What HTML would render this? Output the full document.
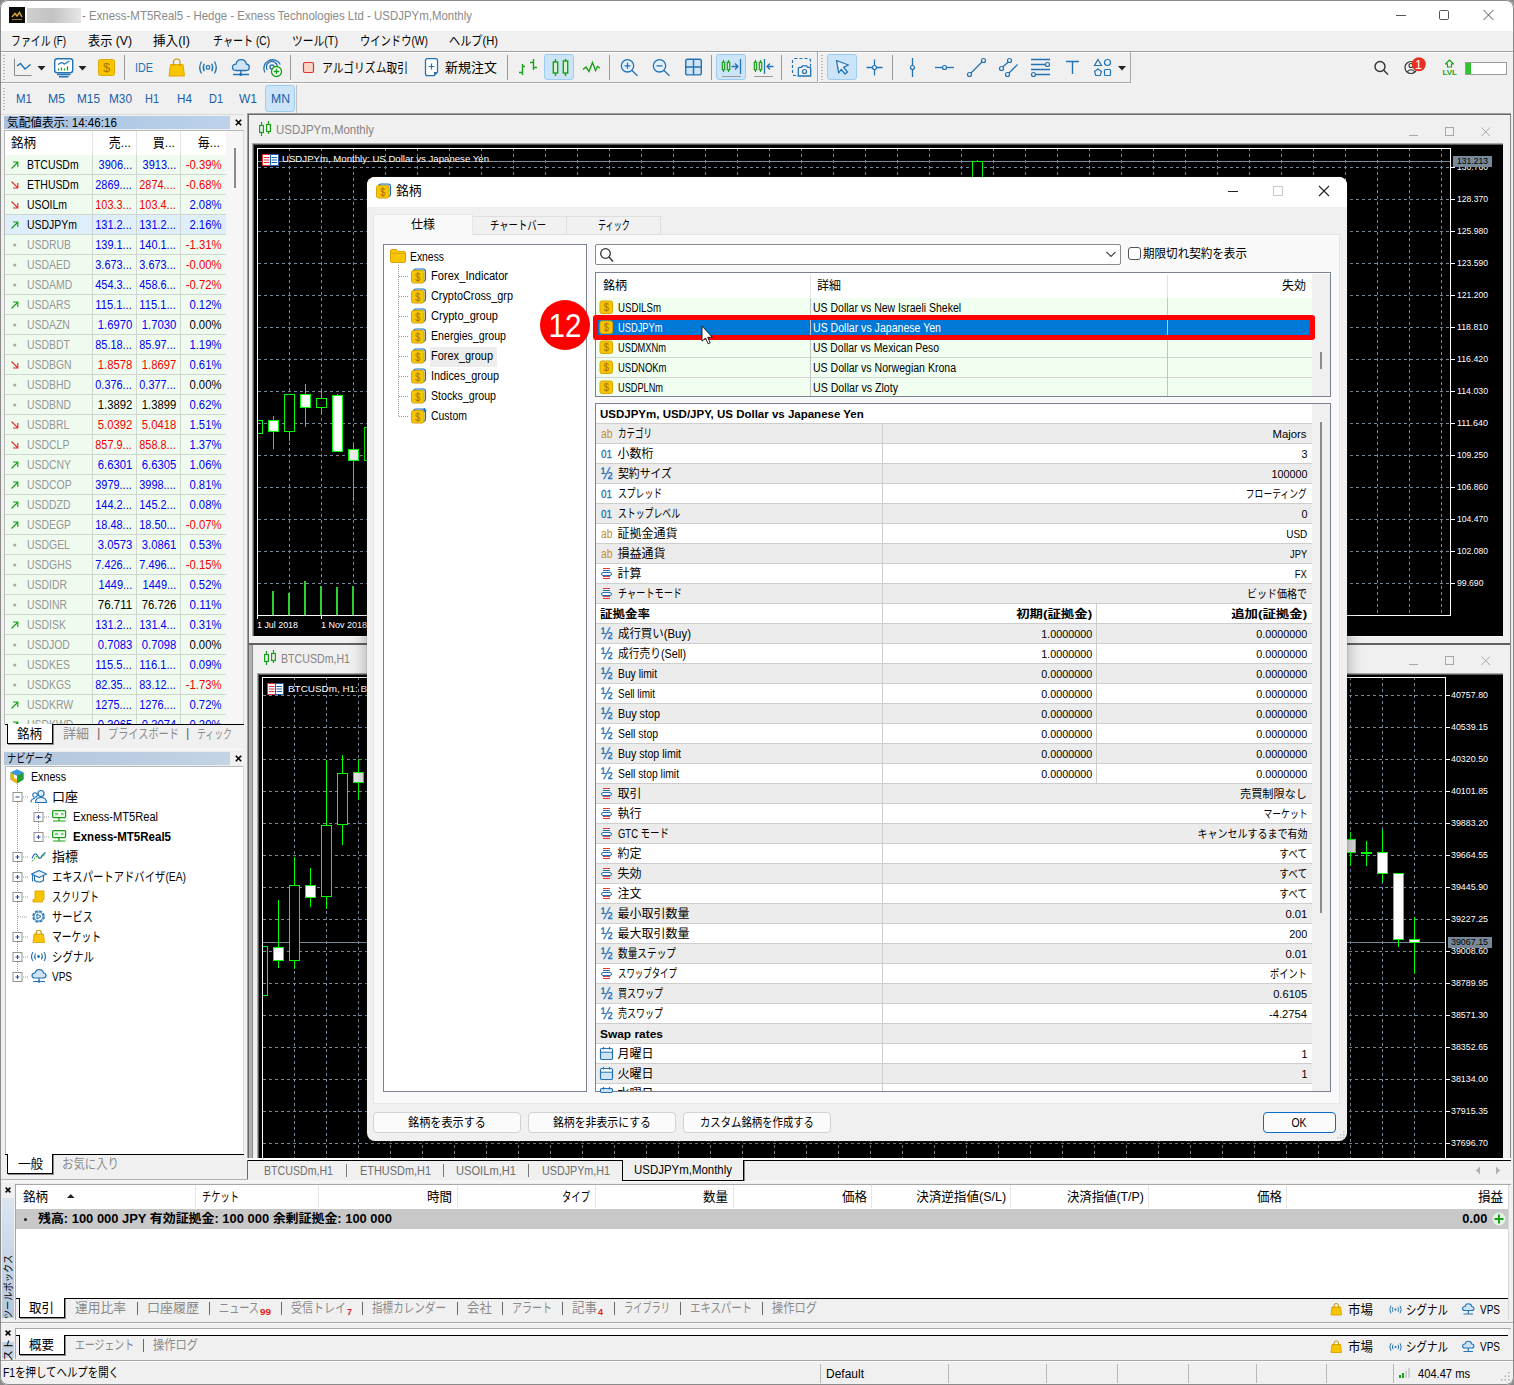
<!DOCTYPE html>
<html lang="ja"><head><meta charset="utf-8"><title>MT5</title>
<style>
html,body{margin:0;padding:0;}
body{width:1514px;height:1385px;overflow:hidden;position:relative;background:#f0f0f0;
font-family:"Liberation Sans","Noto Sans CJK JP",sans-serif;font-size:12px;color:#000;}
div,span,svg{position:absolute;box-sizing:border-box;}
span{white-space:nowrap;}
svg{overflow:visible;}
svg text{font-family:"Liberation Sans","Noto Sans CJK JP",sans-serif;}
</style></head><body>
<div style="left:0px;top:0px;width:1514px;height:31px;background:#ffffff;"></div>
<div style="left:9px;top:7px;width:16px;height:16px;background:#0c0c0c;"></div>
<svg style="left:9px;top:7px;" width="16" height="16" viewBox="0 0 16 16"><path d="M3 10 L6 6.5 L8 9 L10.5 5.5 L13 10" stroke="#d8a030" stroke-width="1.5" fill="none"/><path d="M3 12.5 H13" stroke="#a07820" stroke-width="1"/></svg>
<div style="left:27px;top:8px;width:54px;height:15px;background:linear-gradient(90deg,#d0d0d0,#c2c2c2 45%,#e6e6e6);"></div>
<span style="left:82px;top:7.5px;line-height:16px;height:16px;font-size:13px;color:#8a8a8a;transform:scaleX(0.881);transform-origin:0 50%;">- Exness-MT5Real5 - Hedge - Exness Technologies Ltd - USDJPYm,Monthly</span>
<svg style="left:1395px;top:7px;" width="110" height="16" viewBox="0 0 110 16"><path d="M1 8.5 H11" stroke="#555" fill="none"/><rect x="44.5" y="3.5" width="9" height="9" rx="1.2" stroke="#555" fill="none"/><path d="M88.5 3 L98.5 13 M98.5 3 L88.5 13" stroke="#555" fill="none"/></svg>
<span style="left:11px;top:32.5px;line-height:16px;height:16px;font-size:13px;transform:scaleX(0.762);transform-origin:0 50%;">ファイル (F)</span>
<span style="left:88px;top:32.5px;line-height:16px;height:16px;font-size:13px;transform:scaleX(0.937);transform-origin:0 50%;">表示 (V)</span>
<span style="left:153px;top:32.5px;line-height:16px;height:16px;font-size:13px;transform:scaleX(0.967);transform-origin:0 50%;">挿入(I)</span>
<span style="left:213px;top:32.5px;line-height:16px;height:16px;font-size:13px;transform:scaleX(0.775);transform-origin:0 50%;">チャート (C)</span>
<span style="left:292px;top:32.5px;line-height:16px;height:16px;font-size:13px;transform:scaleX(0.827);transform-origin:0 50%;">ツール(T)</span>
<span style="left:360px;top:32.5px;line-height:16px;height:16px;font-size:13px;transform:scaleX(0.791);transform-origin:0 50%;">ウインドウ(W)</span>
<span style="left:449px;top:32.5px;line-height:16px;height:16px;font-size:13px;transform:scaleX(0.859);transform-origin:0 50%;">ヘルプ(H)</span>
<div style="left:0px;top:51px;width:1514px;height:1px;background:#a0a0a0;"></div>
<div style="left:0px;top:52px;width:1514px;height:1px;background:#fdfdfd;"></div>
<div style="left:0px;top:82px;width:1131px;height:1px;background:#a8a8a8;"></div>
<div style="left:0px;top:83px;width:1131px;height:1px;background:#fafafa;"></div>
<div style="left:817px;top:52px;width:1px;height:31px;background:#a8a8a8;"></div>
<div style="left:818px;top:52px;width:1px;height:31px;background:#fafafa;"></div>
<div style="left:1130px;top:52px;width:1px;height:31px;background:#a8a8a8;"></div>
<div style="left:3px;top:55px;width:2px;height:25px;background-image:repeating-linear-gradient(180deg,#b8b8b8 0 1px,transparent 1px 3px);"></div>
<div style="left:821px;top:55px;width:2px;height:25px;background-image:repeating-linear-gradient(180deg,#b8b8b8 0 1px,transparent 1px 3px);"></div>
<div style="left:3px;top:88px;width:2px;height:22px;background-image:repeating-linear-gradient(180deg,#b8b8b8 0 1px,transparent 1px 3px);"></div>
<svg style="left:0px;top:0px;" width="1514" height="120" viewBox="0 0 1514 120"><path d="M14.5 58.5 V75.5 H31.5" stroke="#8c8c8c" fill="none"/><path d="M17 66 L20.5 63.5 L25 69 L30.5 64.5" stroke="#2272b4" stroke-width="1.4" fill="none"/><path d="M37.5 66 H45.5 L41.5 70.5 Z" fill="#222"/><path d="M78.5 66 H86.5 L82.5 70.5 Z" fill="#222"/><rect x="54.7" y="58.7" width="18" height="14" rx="2.5" stroke="#2272b4" stroke-width="1.4" fill="#fff"/><path d="M57 74.5 H70.5 M59 76.8 H68.5" stroke="#2272b4" stroke-width="1.4"/><path d="M58 64.5 L61.5 62.5 L64.5 64 L69.5 61" stroke="#2272b4" stroke-width="1.2" fill="none"/><path d="M58.5 70.5 V68.5 M61.5 70.5 V67.5 M64.5 70.5 V68.5 M67.5 70.5 V66.5" stroke="#18a018" stroke-width="1.3"/><rect x="98.5" y="59.5" width="16" height="16" rx="2" fill="#f7c600" stroke="#e0a800"/><text x="106.5" y="72.3" font-size="13" text-anchor="middle" fill="#a87800">$</text><path d="M124.5 55 V80 M290.5 55 V80 M507.5 55 V80 M609.5 55 V80 M711.5 55 V80 M781.5 55 V80 M892.5 55 V80" stroke="#9a9a9a"/><path d="M170.5 64.5 H183 L184.5 76 H169 Z" fill="#f7c600" stroke="#e0a800"/><path d="M173.5 66 V62 Q173.5 59 176.7 59 Q180 59 180 62 V66" stroke="#c89600" fill="none" stroke-width="1.2"/><circle cx="208" cy="67.5" r="1.8" stroke="#2272b4" fill="none" stroke-width="1.3"/><path d="M204.3 63.8 Q202.3 67.5 204.3 71.2 M211.7 63.8 Q213.7 67.5 211.7 71.2 M201.5 61.5 Q198 67.5 201.5 73.5 M214.5 61.5 Q218 67.5 214.5 73.5" stroke="#2272b4" fill="none" stroke-width="1.3"/><path d="M236 70.5 Q232.5 70.5 232.5 67.3 Q232.5 64.3 236 64.2 Q237 59.5 241.5 59.7 Q245.5 59.8 246.3 64 Q249.3 64.3 249.3 67.3 Q249.3 70.5 246 70.5 Z" stroke="#2272b4" fill="#cfe4f5" stroke-width="1.3"/><path d="M240.8 70.5 V74 M233 74.5 H249" stroke="#2272b4" stroke-width="1.3"/><circle cx="240.8" cy="74.5" r="1.5" fill="#2272b4"/><circle cx="272" cy="67" r="2" stroke="#2272b4" fill="none" stroke-width="1.3"/><path d="M267.3 70 A5.5 5.5 0 1 1 277.3 66" stroke="#2272b4" fill="none" stroke-width="1.3"/><path d="M264.8 72.5 A8.6 8.6 0 1 1 280.3 64.5" stroke="#2272b4" fill="none" stroke-width="1.3"/><circle cx="276.5" cy="71.5" r="5" fill="#fff" stroke="#18a018" stroke-width="1.3"/><path d="M273.7 71.5 H279.3 M276.5 68.7 V74.3" stroke="#18a018" stroke-width="1.3"/><rect x="303.5" y="62.5" width="10" height="10" rx="1.5" fill="#fad4c4" stroke="#e03434" stroke-width="1.2"/><path d="M427.5 58.7 H435.5 Q437.5 58.7 437.5 60.7 V72 L434 75.7 H427.5 Q425.5 75.7 425.5 73.7 V60.7 Q425.5 58.7 427.5 58.7 Z" stroke="#2272b4" fill="#fff" stroke-width="1.3"/><path d="M437.5 72 H434 V75.7 Z" fill="#2272b4"/><path d="M428.5 66.5 H434.5 M431.5 63.5 V69.5" stroke="#2272b4" stroke-width="1.2"/><path d="M522.5 64 V75 M519 72.5 H522.5 M522.5 66.5 H525 M533.5 59 V70 M530 62.5 H533.5 M533.5 67.5 H537" stroke="#18a018" stroke-width="1.4" fill="none"/><rect x="544.5" y="54.5" width="29" height="25" rx="2.5" fill="#cce4f7" stroke="#9cccf0"/><path d="M555.5 59 V76 M565.5 59 V76" stroke="#18a018" stroke-width="1.4"/><rect x="553.3" y="62" width="4.4" height="11" fill="#d8f2d8" stroke="#18a018" stroke-width="1.4"/><rect x="563.3" y="61" width="4.4" height="12" fill="#d8f2d8" stroke="#18a018" stroke-width="1.4"/><path d="M583 69.5 L586 67 L589 71.5 L592.5 62.5 L595.5 70.5 L597.5 66.5 L600 68" stroke="#18a018" stroke-width="1.4" fill="none"/><circle cx="627.5" cy="65.8" r="6.2" stroke="#2272b4" fill="#e4f0fa" stroke-width="1.3"/><path d="M632 70.5 L637.5 75.7 M624.5 65.8 H630.5 M627.5 62.8 V68.8" stroke="#2272b4" stroke-width="1.3"/><circle cx="659.5" cy="65.8" r="6.2" stroke="#2272b4" fill="#e4f0fa" stroke-width="1.3"/><path d="M664 70.5 L669.5 75.7 M656.5 65.8 H662.5" stroke="#2272b4" stroke-width="1.3"/><rect x="685.7" y="59.3" width="15.6" height="15.6" rx="2" stroke="#2272b4" fill="#cfe4f5" stroke-width="1.4"/><path d="M693.5 59.5 V75 M686 67 H701" stroke="#2272b4" stroke-width="1.4"/><rect x="716.5" y="54.5" width="29" height="25" rx="2.5" fill="#cce4f7" stroke="#9cccf0"/><path d="M723.5 60 V72 M728.5 60 V72" stroke="#18a018" stroke-width="1.2"/><rect x="722.3" y="62.3" width="2.4" height="7.4" fill="#d8f2d8" stroke="#18a018" stroke-width="1.2"/><rect x="727.3" y="62.3" width="2.4" height="7.4" fill="#d8f2d8" stroke="#18a018" stroke-width="1.2"/><path d="M731.5 66.5 H738 M735 63.5 L738 66.5 L735 69.5" stroke="#2272b4" fill="none" stroke-width="1.3"/><path d="M740.5 59 V74" stroke="#2272b4" stroke-width="1.3"/><path d="M722 76.5 H741" stroke="#9a9a9a"/><path d="M755.5 60 V72 M760.5 60 V72" stroke="#18a018" stroke-width="1.2"/><rect x="754.3" y="62.3" width="2.4" height="7.4" fill="#d8f2d8" stroke="#18a018" stroke-width="1.2"/><rect x="759.3" y="62.3" width="2.4" height="7.4" fill="#d8f2d8" stroke="#18a018" stroke-width="1.2"/><path d="M764.5 59 V74" stroke="#2272b4" stroke-width="1.3"/><path d="M767 66.5 H773.5 M770 63.5 L767 66.5 L770 69.5" stroke="#2272b4" fill="none" stroke-width="1.3"/><path d="M754 76.5 H773" stroke="#9a9a9a"/><rect x="792.5" y="58.5" width="18" height="17" rx="2" stroke="#2272b4" fill="none" stroke-width="1.2" stroke-dasharray="3 2"/><path d="M798.3 76 V68.5 Q798.3 67.3 799.5 67.3 H801.5 L802.5 65.8 H806.5 L807.5 67.3 H809.5 Q810.7 67.3 810.7 68.5 V76 Z" fill="#f0f0f0" stroke="#2272b4" stroke-width="1.3"/><circle cx="804.5" cy="71.5" r="2" stroke="#2272b4" fill="none" stroke-width="1.2"/><rect x="827.5" y="54.5" width="29" height="25" rx="2.5" fill="#cce4f7" stroke="#9cccf0"/><path d="M836.5 60.5 L848.5 65 L843.5 67.3 L847.5 72 L845 74 L841.3 69.3 L838.7 73 Z" stroke="#2272b4" fill="#e4f0fa" stroke-width="1.3" stroke-linejoin="round"/><path d="M866.5 67.5 H882.5 M874.5 59.5 V75.5" stroke="#2272b4" stroke-width="1.3"/><circle cx="874.5" cy="67.5" r="2" fill="#f0f0f0" stroke="#2272b4" stroke-width="1.2"/><path d="M912.5 58 V77" stroke="#2272b4" stroke-width="1.3"/><circle cx="912.5" cy="67.5" r="2" fill="#f0f0f0" stroke="#2272b4" stroke-width="1.2"/><path d="M935 67.5 H954" stroke="#2272b4" stroke-width="1.3"/><circle cx="944.5" cy="67.5" r="2" fill="#f0f0f0" stroke="#2272b4" stroke-width="1.2"/><path d="M970 74 L983 61" stroke="#2272b4" stroke-width="1.3"/><circle cx="969.5" cy="74.5" r="2" fill="#f0f0f0" stroke="#2272b4" stroke-width="1.2"/><circle cx="983.5" cy="60.5" r="2" fill="#f0f0f0" stroke="#2272b4" stroke-width="1.2"/><path d="M1002 67.5 L1009 61.5 M1008 74 L1017.5 64.5" stroke="#2272b4" stroke-width="1.3"/><circle cx="1001.5" cy="68.5" r="2" fill="#f0f0f0" stroke="#2272b4" stroke-width="1.2"/><circle cx="1009.5" cy="60.5" r="2" fill="#f0f0f0" stroke="#2272b4" stroke-width="1.2"/><circle cx="1007.5" cy="74.5" r="2" fill="#f0f0f0" stroke="#2272b4" stroke-width="1.2"/><path d="M1031 59.5 H1050 M1031 64.5 H1046 M1031 69.5 H1050 M1036 74.5 H1050" stroke="#2272b4" stroke-width="1.3"/><circle cx="1047.5" cy="64.5" r="2" fill="#f0f0f0" stroke="#2272b4" stroke-width="1.2"/><circle cx="1033.5" cy="74.5" r="2" fill="#f0f0f0" stroke="#2272b4" stroke-width="1.2"/><path d="M1066 61.5 H1079 M1072.5 61.5 V74" stroke="#2272b4" stroke-width="1.4"/><path d="M1098 59.5 L1101.5 65.5 H1094.5 Z" stroke="#2272b4" fill="none" stroke-width="1.2"/><circle cx="1107.5" cy="62.5" r="3" stroke="#2272b4" fill="none" stroke-width="1.2"/><path d="M1098 69 L1101.5 71.5 L1100.2 75.5 H1095.8 L1094.5 71.5 Z" stroke="#2272b4" fill="none" stroke-width="1.2"/><rect x="1104.5" y="69.5" width="6" height="6" rx="1" stroke="#2272b4" fill="none" stroke-width="1.2"/><path d="M1118 66 H1126 L1122 70.5 Z" fill="#222"/><circle cx="1380" cy="66.5" r="5" stroke="#333" fill="none" stroke-width="1.4"/><path d="M1383.7 70.2 L1388 74.5" stroke="#333" stroke-width="1.4"/><circle cx="1411" cy="67.5" r="6" stroke="#333" fill="none" stroke-width="1.2"/><circle cx="1411" cy="65.5" r="2" stroke="#333" fill="none" stroke-width="1.1"/><path d="M1407 72 Q1411 67.5 1415 72" stroke="#333" fill="none" stroke-width="1.1"/><circle cx="1418.8" cy="64.3" r="7" fill="#e8311f"/><text x="1418.6" y="68.8" font-size="12.5" text-anchor="middle" fill="#fff">1</text><path d="M1449.5 60 L1453.5 64 H1451.5 V67 H1447.5 V64 H1445.5 Z" stroke="#18a018" fill="none" stroke-width="1.1" stroke-linejoin="round"/><text x="1449.7" y="74.5" font-size="8" font-weight="bold" text-anchor="middle" fill="#18a018">LVL</text><rect x="1465.5" y="62.5" width="41" height="12" fill="#fff" stroke="#9a9a9a"/><rect x="1466" y="63" width="5" height="11" fill="#2fc42f"/></svg>
<span style="left:135px;top:59.5px;line-height:16px;height:16px;font-size:13px;color:#2272b4;transform:scaleX(0.831);transform-origin:0 50%;">IDE</span>
<span style="left:322px;top:59.5px;line-height:16px;height:16px;font-size:13px;transform:scaleX(0.83);transform-origin:0 50%;">アルゴリズム取引</span>
<span style="left:445px;top:59.5px;line-height:16px;height:16px;font-size:13px;">新規注文</span>
<div style="left:265px;top:85px;width:30px;height:27px;background:#cce4f7;border:1px solid #9cccf0;border-radius:3px;"></div>
<span style="left:16px;top:90.5px;line-height:16px;height:16px;font-size:13px;color:#1a5fa8;transform:scaleX(0.886);transform-origin:0 50%;">M1</span>
<span style="left:48px;top:90.5px;line-height:16px;height:16px;font-size:13px;color:#1a5fa8;transform:scaleX(0.941);transform-origin:0 50%;">M5</span>
<span style="left:77px;top:90.5px;line-height:16px;height:16px;font-size:13px;color:#1a5fa8;transform:scaleX(0.909);transform-origin:0 50%;">M15</span>
<span style="left:109px;top:90.5px;line-height:16px;height:16px;font-size:13px;color:#1a5fa8;transform:scaleX(0.909);transform-origin:0 50%;">M30</span>
<span style="left:145px;top:90.5px;line-height:16px;height:16px;font-size:13px;color:#1a5fa8;transform:scaleX(0.842);transform-origin:0 50%;">H1</span>
<span style="left:177px;top:90.5px;line-height:16px;height:16px;font-size:13px;color:#1a5fa8;transform:scaleX(0.902);transform-origin:0 50%;">H4</span>
<span style="left:209px;top:90.5px;line-height:16px;height:16px;font-size:13px;color:#1a5fa8;transform:scaleX(0.842);transform-origin:0 50%;">D1</span>
<span style="left:239px;top:90.5px;line-height:16px;height:16px;font-size:13px;color:#1a5fa8;transform:scaleX(0.923);transform-origin:0 50%;">W1</span>
<span style="left:271px;top:90.5px;line-height:16px;height:16px;font-size:13px;color:#1a5fa8;transform:scaleX(0.94);transform-origin:0 50%;">MN</span>
<div style="left:296px;top:85px;width:1px;height:28px;background:#c0c0c0;"></div>
<div style="left:0px;top:114px;width:247px;height:1px;background:#dadada;"></div>
<div style="left:4px;top:116px;width:226px;height:13px;background:linear-gradient(90deg,#a6bfe0,#b4cbe6 60%,#bdd2ea);"></div>
<span style="left:7px;top:114.5px;line-height:16px;height:16px;transform:scaleX(0.97);transform-origin:0 50%;">気配値表示: 14:46:16</span>
<svg style="left:235px;top:119px;" width="7" height="7" viewBox="0 0 7 7"><path d="M0.8 0.8 L6.2 6.2 M6.2 0.8 L0.8 6.2" stroke="#000" stroke-width="1.6"/></svg>
<div style="left:4px;top:130px;width:240px;height:1px;background:#e2e2e2;"></div>
<div style="left:243px;top:130px;width:1px;height:594px;background:#dcdcdc;"></div>
<div style="left:5px;top:131px;width:221px;height:24px;background:#fff;"></div>
<div style="left:4px;top:130px;width:240px;height:594px;border-top:1px solid #b8b8b8;border-left:1px solid #b8b8b8;"></div>
<div style="left:226px;top:131px;width:17px;height:593px;background:#f6f6f6;"></div>
<div style="left:234px;top:148px;width:2px;height:40px;background:#8a8a8a;"></div>
<span style="left:11px;top:135.0px;line-height:16px;height:16px;font-size:13px;transform:scaleX(0.961);transform-origin:0 50%;">銘柄</span>
<span style="right:1383px;top:135.0px;line-height:16px;height:16px;font-size:13px;transform:scaleX(0.923);transform-origin:100% 50%;">売...</span>
<span style="right:1339px;top:135.0px;line-height:16px;height:16px;font-size:13px;transform:scaleX(0.923);transform-origin:100% 50%;">買...</span>
<span style="right:1294px;top:135.0px;line-height:16px;height:16px;font-size:13px;transform:scaleX(0.923);transform-origin:100% 50%;">毎...</span>
<div style="left:5px;top:155px;width:221px;height:569px;overflow:hidden;background:#f0fbf0">
<div style="left:0;top:19px;width:221px;height:1px;background:#cfd6cf"></div>
<div style="left:0;top:39px;width:221px;height:1px;background:#cfd6cf"></div>
<div style="left:0;top:59px;width:221px;height:1px;background:#cfd6cf"></div>
<div style="left:0;top:60px;width:221px;height:19px;background:#deeefb"></div>
<div style="left:0;top:79px;width:221px;height:1px;background:#cfd6cf"></div>
<div style="left:0;top:99px;width:221px;height:1px;background:#cfd6cf"></div>
<div style="left:0;top:119px;width:221px;height:1px;background:#cfd6cf"></div>
<div style="left:0;top:139px;width:221px;height:1px;background:#cfd6cf"></div>
<div style="left:0;top:159px;width:221px;height:1px;background:#cfd6cf"></div>
<div style="left:0;top:179px;width:221px;height:1px;background:#cfd6cf"></div>
<div style="left:0;top:199px;width:221px;height:1px;background:#cfd6cf"></div>
<div style="left:0;top:219px;width:221px;height:1px;background:#cfd6cf"></div>
<div style="left:0;top:239px;width:221px;height:1px;background:#cfd6cf"></div>
<div style="left:0;top:259px;width:221px;height:1px;background:#cfd6cf"></div>
<div style="left:0;top:279px;width:221px;height:1px;background:#cfd6cf"></div>
<div style="left:0;top:299px;width:221px;height:1px;background:#cfd6cf"></div>
<div style="left:0;top:319px;width:221px;height:1px;background:#cfd6cf"></div>
<div style="left:0;top:339px;width:221px;height:1px;background:#cfd6cf"></div>
<div style="left:0;top:359px;width:221px;height:1px;background:#cfd6cf"></div>
<div style="left:0;top:379px;width:221px;height:1px;background:#cfd6cf"></div>
<div style="left:0;top:399px;width:221px;height:1px;background:#cfd6cf"></div>
<div style="left:0;top:419px;width:221px;height:1px;background:#cfd6cf"></div>
<div style="left:0;top:439px;width:221px;height:1px;background:#cfd6cf"></div>
<div style="left:0;top:459px;width:221px;height:1px;background:#cfd6cf"></div>
<div style="left:0;top:479px;width:221px;height:1px;background:#cfd6cf"></div>
<div style="left:0;top:499px;width:221px;height:1px;background:#cfd6cf"></div>
<div style="left:0;top:519px;width:221px;height:1px;background:#cfd6cf"></div>
<div style="left:0;top:539px;width:221px;height:1px;background:#cfd6cf"></div>
<div style="left:0;top:559px;width:221px;height:1px;background:#cfd6cf"></div>
<div style="left:0;top:579px;width:221px;height:1px;background:#cfd6cf"></div>
<div style="left:87px;top:0;width:1px;height:569px;background:#cfd6cf"></div>
<div style="left:131px;top:0;width:1px;height:569px;background:#cfd6cf"></div>
<div style="left:175px;top:0;width:1px;height:569px;background:#cfd6cf"></div>
<svg style="left:0;top:0" width="221" height="569"><path d="M6.5 13.5 L12.5 7.5 M8 7 H12.8 V12" stroke="#18a018" stroke-width="1.15" fill="none"/><path d="M6.5 26.5 L12.5 32.5 M8 33 H12.8 V28" stroke="#e03030" stroke-width="1.15" fill="none"/><path d="M6.5 46.5 L12.5 52.5 M8 53 H12.8 V48" stroke="#e03030" stroke-width="1.15" fill="none"/><path d="M6.5 73.5 L12.5 67.5 M8 67 H12.8 V72" stroke="#18a018" stroke-width="1.15" fill="none"/><circle cx="9.7" cy="90" r="1.6" fill="#a8a8a8"/><circle cx="9.7" cy="110" r="1.6" fill="#a8a8a8"/><circle cx="9.7" cy="130" r="1.6" fill="#a8a8a8"/><path d="M6.5 153.5 L12.5 147.5 M8 147 H12.8 V152" stroke="#18a018" stroke-width="1.15" fill="none"/><circle cx="9.7" cy="170" r="1.6" fill="#a8a8a8"/><circle cx="9.7" cy="190" r="1.6" fill="#a8a8a8"/><path d="M6.5 206.5 L12.5 212.5 M8 213 H12.8 V208" stroke="#e03030" stroke-width="1.15" fill="none"/><circle cx="9.7" cy="230" r="1.6" fill="#a8a8a8"/><circle cx="9.7" cy="250" r="1.6" fill="#a8a8a8"/><path d="M6.5 266.5 L12.5 272.5 M8 273 H12.8 V268" stroke="#e03030" stroke-width="1.15" fill="none"/><path d="M6.5 286.5 L12.5 292.5 M8 293 H12.8 V288" stroke="#e03030" stroke-width="1.15" fill="none"/><path d="M6.5 313.5 L12.5 307.5 M8 307 H12.8 V312" stroke="#18a018" stroke-width="1.15" fill="none"/><path d="M6.5 333.5 L12.5 327.5 M8 327 H12.8 V332" stroke="#18a018" stroke-width="1.15" fill="none"/><path d="M6.5 353.5 L12.5 347.5 M8 347 H12.8 V352" stroke="#18a018" stroke-width="1.15" fill="none"/><path d="M6.5 373.5 L12.5 367.5 M8 367 H12.8 V372" stroke="#18a018" stroke-width="1.15" fill="none"/><circle cx="9.7" cy="390" r="1.6" fill="#a8a8a8"/><circle cx="9.7" cy="410" r="1.6" fill="#a8a8a8"/><circle cx="9.7" cy="430" r="1.6" fill="#a8a8a8"/><circle cx="9.7" cy="450" r="1.6" fill="#a8a8a8"/><path d="M6.5 473.5 L12.5 467.5 M8 467 H12.8 V472" stroke="#18a018" stroke-width="1.15" fill="none"/><circle cx="9.7" cy="490" r="1.6" fill="#a8a8a8"/><circle cx="9.7" cy="510" r="1.6" fill="#a8a8a8"/><circle cx="9.7" cy="530" r="1.6" fill="#a8a8a8"/><path d="M6.5 553.5 L12.5 547.5 M8 547 H12.8 V552" stroke="#18a018" stroke-width="1.15" fill="none"/><path d="M6.5 573.5 L12.5 567.5 M8 567 H12.8 V572" stroke="#18a018" stroke-width="1.15" fill="none"/></svg>
<span style="right:94px;top:2px;line-height:16px;font-size:12.5px;color:#0000f0;transform:scaleX(0.88);transform-origin:100% 50%">3906...</span>
<span style="right:50px;top:2px;line-height:16px;font-size:12.5px;color:#0000f0;transform:scaleX(0.88);transform-origin:100% 50%">3913...</span>
<span style="right:4.5px;top:2px;line-height:16px;font-size:12.5px;color:#f00000;transform:scaleX(0.906);transform-origin:100% 50%">-0.39%</span>
<span style="left:21.5px;top:2px;line-height:16px;font-size:12.5px;color:#000;transform:scaleX(0.835);transform-origin:0 50%">BTCUSDm</span>
<span style="right:94px;top:22px;line-height:16px;font-size:12.5px;color:#0000f0;transform:scaleX(0.873);transform-origin:100% 50%">2869....</span>
<span style="right:50px;top:22px;line-height:16px;font-size:12.5px;color:#f00000;transform:scaleX(0.873);transform-origin:100% 50%">2874....</span>
<span style="right:4.5px;top:22px;line-height:16px;font-size:12.5px;color:#f00000;transform:scaleX(0.906);transform-origin:100% 50%">-0.68%</span>
<span style="left:21.5px;top:22px;line-height:16px;font-size:12.5px;color:#000;transform:scaleX(0.835);transform-origin:0 50%">ETHUSDm</span>
<span style="right:94px;top:42px;line-height:16px;font-size:12.5px;color:#f00000;transform:scaleX(0.873);transform-origin:100% 50%">103.3...</span>
<span style="right:50px;top:42px;line-height:16px;font-size:12.5px;color:#f00000;transform:scaleX(0.873);transform-origin:100% 50%">103.4...</span>
<span style="right:4.5px;top:42px;line-height:16px;font-size:12.5px;color:#0000f0;transform:scaleX(0.903);transform-origin:100% 50%">2.08%</span>
<span style="left:21.5px;top:42px;line-height:16px;font-size:12.5px;color:#000;transform:scaleX(0.835);transform-origin:0 50%">USOILm</span>
<span style="right:94px;top:62px;line-height:16px;font-size:12.5px;color:#0000f0;transform:scaleX(0.873);transform-origin:100% 50%">131.2...</span>
<span style="right:50px;top:62px;line-height:16px;font-size:12.5px;color:#0000f0;transform:scaleX(0.873);transform-origin:100% 50%">131.2...</span>
<span style="right:4.5px;top:62px;line-height:16px;font-size:12.5px;color:#0000f0;transform:scaleX(0.903);transform-origin:100% 50%">2.16%</span>
<span style="left:21.5px;top:62px;line-height:16px;font-size:12.5px;color:#000;transform:scaleX(0.835);transform-origin:0 50%">USDJPYm</span>
<span style="right:94px;top:82px;line-height:16px;font-size:12.5px;color:#0000f0;transform:scaleX(0.873);transform-origin:100% 50%">139.1...</span>
<span style="right:50px;top:82px;line-height:16px;font-size:12.5px;color:#0000f0;transform:scaleX(0.873);transform-origin:100% 50%">140.1...</span>
<span style="right:4.5px;top:82px;line-height:16px;font-size:12.5px;color:#f00000;transform:scaleX(0.906);transform-origin:100% 50%">-1.31%</span>
<span style="left:21.5px;top:82px;line-height:16px;font-size:12.5px;color:#959595;transform:scaleX(0.835);transform-origin:0 50%">USDRUB</span>
<span style="right:94px;top:102px;line-height:16px;font-size:12.5px;color:#0000f0;transform:scaleX(0.873);transform-origin:100% 50%">3.673...</span>
<span style="right:50px;top:102px;line-height:16px;font-size:12.5px;color:#0000f0;transform:scaleX(0.873);transform-origin:100% 50%">3.673...</span>
<span style="right:4.5px;top:102px;line-height:16px;font-size:12.5px;color:#f00000;transform:scaleX(0.906);transform-origin:100% 50%">-0.00%</span>
<span style="left:21.5px;top:102px;line-height:16px;font-size:12.5px;color:#959595;transform:scaleX(0.835);transform-origin:0 50%">USDAED</span>
<span style="right:94px;top:122px;line-height:16px;font-size:12.5px;color:#0000f0;transform:scaleX(0.873);transform-origin:100% 50%">454.3...</span>
<span style="right:50px;top:122px;line-height:16px;font-size:12.5px;color:#0000f0;transform:scaleX(0.873);transform-origin:100% 50%">458.6...</span>
<span style="right:4.5px;top:122px;line-height:16px;font-size:12.5px;color:#f00000;transform:scaleX(0.906);transform-origin:100% 50%">-0.72%</span>
<span style="left:21.5px;top:122px;line-height:16px;font-size:12.5px;color:#959595;transform:scaleX(0.835);transform-origin:0 50%">USDAMD</span>
<span style="right:94px;top:142px;line-height:16px;font-size:12.5px;color:#0000f0;transform:scaleX(0.893);transform-origin:100% 50%">115.1...</span>
<span style="right:50px;top:142px;line-height:16px;font-size:12.5px;color:#0000f0;transform:scaleX(0.893);transform-origin:100% 50%">115.1...</span>
<span style="right:4.5px;top:142px;line-height:16px;font-size:12.5px;color:#0000f0;transform:scaleX(0.903);transform-origin:100% 50%">0.12%</span>
<span style="left:21.5px;top:142px;line-height:16px;font-size:12.5px;color:#959595;transform:scaleX(0.835);transform-origin:0 50%">USDARS</span>
<span style="right:94px;top:162px;line-height:16px;font-size:12.5px;color:#0000f0;transform:scaleX(0.902);transform-origin:100% 50%">1.6970</span>
<span style="right:50px;top:162px;line-height:16px;font-size:12.5px;color:#0000f0;transform:scaleX(0.902);transform-origin:100% 50%">1.7030</span>
<span style="right:4.5px;top:162px;line-height:16px;font-size:12.5px;color:#000;transform:scaleX(0.903);transform-origin:100% 50%">0.00%</span>
<span style="left:21.5px;top:162px;line-height:16px;font-size:12.5px;color:#959595;transform:scaleX(0.835);transform-origin:0 50%">USDAZN</span>
<span style="right:94px;top:182px;line-height:16px;font-size:12.5px;color:#0000f0;transform:scaleX(0.873);transform-origin:100% 50%">85.18...</span>
<span style="right:50px;top:182px;line-height:16px;font-size:12.5px;color:#0000f0;transform:scaleX(0.873);transform-origin:100% 50%">85.97...</span>
<span style="right:4.5px;top:182px;line-height:16px;font-size:12.5px;color:#0000f0;transform:scaleX(0.903);transform-origin:100% 50%">1.19%</span>
<span style="left:21.5px;top:182px;line-height:16px;font-size:12.5px;color:#959595;transform:scaleX(0.835);transform-origin:0 50%">USDBDT</span>
<span style="right:94px;top:202px;line-height:16px;font-size:12.5px;color:#f00000;transform:scaleX(0.902);transform-origin:100% 50%">1.8578</span>
<span style="right:50px;top:202px;line-height:16px;font-size:12.5px;color:#f00000;transform:scaleX(0.902);transform-origin:100% 50%">1.8697</span>
<span style="right:4.5px;top:202px;line-height:16px;font-size:12.5px;color:#0000f0;transform:scaleX(0.903);transform-origin:100% 50%">0.61%</span>
<span style="left:21.5px;top:202px;line-height:16px;font-size:12.5px;color:#959595;transform:scaleX(0.835);transform-origin:0 50%">USDBGN</span>
<span style="right:94px;top:222px;line-height:16px;font-size:12.5px;color:#0000f0;transform:scaleX(0.873);transform-origin:100% 50%">0.376...</span>
<span style="right:50px;top:222px;line-height:16px;font-size:12.5px;color:#0000f0;transform:scaleX(0.873);transform-origin:100% 50%">0.377...</span>
<span style="right:4.5px;top:222px;line-height:16px;font-size:12.5px;color:#000;transform:scaleX(0.903);transform-origin:100% 50%">0.00%</span>
<span style="left:21.5px;top:222px;line-height:16px;font-size:12.5px;color:#959595;transform:scaleX(0.835);transform-origin:0 50%">USDBHD</span>
<span style="right:94px;top:242px;line-height:16px;font-size:12.5px;color:#000;transform:scaleX(0.902);transform-origin:100% 50%">1.3892</span>
<span style="right:50px;top:242px;line-height:16px;font-size:12.5px;color:#000;transform:scaleX(0.902);transform-origin:100% 50%">1.3899</span>
<span style="right:4.5px;top:242px;line-height:16px;font-size:12.5px;color:#0000f0;transform:scaleX(0.903);transform-origin:100% 50%">0.62%</span>
<span style="left:21.5px;top:242px;line-height:16px;font-size:12.5px;color:#959595;transform:scaleX(0.835);transform-origin:0 50%">USDBND</span>
<span style="right:94px;top:262px;line-height:16px;font-size:12.5px;color:#f00000;transform:scaleX(0.902);transform-origin:100% 50%">5.0392</span>
<span style="right:50px;top:262px;line-height:16px;font-size:12.5px;color:#f00000;transform:scaleX(0.902);transform-origin:100% 50%">5.0418</span>
<span style="right:4.5px;top:262px;line-height:16px;font-size:12.5px;color:#0000f0;transform:scaleX(0.903);transform-origin:100% 50%">1.51%</span>
<span style="left:21.5px;top:262px;line-height:16px;font-size:12.5px;color:#959595;transform:scaleX(0.835);transform-origin:0 50%">USDBRL</span>
<span style="right:94px;top:282px;line-height:16px;font-size:12.5px;color:#f00000;transform:scaleX(0.873);transform-origin:100% 50%">857.9...</span>
<span style="right:50px;top:282px;line-height:16px;font-size:12.5px;color:#f00000;transform:scaleX(0.873);transform-origin:100% 50%">858.8...</span>
<span style="right:4.5px;top:282px;line-height:16px;font-size:12.5px;color:#0000f0;transform:scaleX(0.903);transform-origin:100% 50%">1.37%</span>
<span style="left:21.5px;top:282px;line-height:16px;font-size:12.5px;color:#959595;transform:scaleX(0.835);transform-origin:0 50%">USDCLP</span>
<span style="right:94px;top:302px;line-height:16px;font-size:12.5px;color:#0000f0;transform:scaleX(0.902);transform-origin:100% 50%">6.6301</span>
<span style="right:50px;top:302px;line-height:16px;font-size:12.5px;color:#0000f0;transform:scaleX(0.902);transform-origin:100% 50%">6.6305</span>
<span style="right:4.5px;top:302px;line-height:16px;font-size:12.5px;color:#0000f0;transform:scaleX(0.903);transform-origin:100% 50%">1.06%</span>
<span style="left:21.5px;top:302px;line-height:16px;font-size:12.5px;color:#959595;transform:scaleX(0.835);transform-origin:0 50%">USDCNY</span>
<span style="right:94px;top:322px;line-height:16px;font-size:12.5px;color:#0000f0;transform:scaleX(0.873);transform-origin:100% 50%">3979....</span>
<span style="right:50px;top:322px;line-height:16px;font-size:12.5px;color:#0000f0;transform:scaleX(0.873);transform-origin:100% 50%">3998....</span>
<span style="right:4.5px;top:322px;line-height:16px;font-size:12.5px;color:#0000f0;transform:scaleX(0.903);transform-origin:100% 50%">0.81%</span>
<span style="left:21.5px;top:322px;line-height:16px;font-size:12.5px;color:#959595;transform:scaleX(0.835);transform-origin:0 50%">USDCOP</span>
<span style="right:94px;top:342px;line-height:16px;font-size:12.5px;color:#0000f0;transform:scaleX(0.873);transform-origin:100% 50%">144.2...</span>
<span style="right:50px;top:342px;line-height:16px;font-size:12.5px;color:#0000f0;transform:scaleX(0.873);transform-origin:100% 50%">145.2...</span>
<span style="right:4.5px;top:342px;line-height:16px;font-size:12.5px;color:#0000f0;transform:scaleX(0.903);transform-origin:100% 50%">0.08%</span>
<span style="left:21.5px;top:342px;line-height:16px;font-size:12.5px;color:#959595;transform:scaleX(0.835);transform-origin:0 50%">USDDZD</span>
<span style="right:94px;top:362px;line-height:16px;font-size:12.5px;color:#0000f0;transform:scaleX(0.873);transform-origin:100% 50%">18.48...</span>
<span style="right:50px;top:362px;line-height:16px;font-size:12.5px;color:#0000f0;transform:scaleX(0.873);transform-origin:100% 50%">18.50...</span>
<span style="right:4.5px;top:362px;line-height:16px;font-size:12.5px;color:#f00000;transform:scaleX(0.906);transform-origin:100% 50%">-0.07%</span>
<span style="left:21.5px;top:362px;line-height:16px;font-size:12.5px;color:#959595;transform:scaleX(0.835);transform-origin:0 50%">USDEGP</span>
<span style="right:94px;top:382px;line-height:16px;font-size:12.5px;color:#0000f0;transform:scaleX(0.902);transform-origin:100% 50%">3.0573</span>
<span style="right:50px;top:382px;line-height:16px;font-size:12.5px;color:#0000f0;transform:scaleX(0.902);transform-origin:100% 50%">3.0861</span>
<span style="right:4.5px;top:382px;line-height:16px;font-size:12.5px;color:#0000f0;transform:scaleX(0.903);transform-origin:100% 50%">0.53%</span>
<span style="left:21.5px;top:382px;line-height:16px;font-size:12.5px;color:#959595;transform:scaleX(0.835);transform-origin:0 50%">USDGEL</span>
<span style="right:94px;top:402px;line-height:16px;font-size:12.5px;color:#0000f0;transform:scaleX(0.873);transform-origin:100% 50%">7.426...</span>
<span style="right:50px;top:402px;line-height:16px;font-size:12.5px;color:#0000f0;transform:scaleX(0.873);transform-origin:100% 50%">7.496...</span>
<span style="right:4.5px;top:402px;line-height:16px;font-size:12.5px;color:#f00000;transform:scaleX(0.906);transform-origin:100% 50%">-0.15%</span>
<span style="left:21.5px;top:402px;line-height:16px;font-size:12.5px;color:#959595;transform:scaleX(0.835);transform-origin:0 50%">USDGHS</span>
<span style="right:94px;top:422px;line-height:16px;font-size:12.5px;color:#0000f0;transform:scaleX(0.88);transform-origin:100% 50%">1449...</span>
<span style="right:50px;top:422px;line-height:16px;font-size:12.5px;color:#0000f0;transform:scaleX(0.88);transform-origin:100% 50%">1449...</span>
<span style="right:4.5px;top:422px;line-height:16px;font-size:12.5px;color:#0000f0;transform:scaleX(0.903);transform-origin:100% 50%">0.52%</span>
<span style="left:21.5px;top:422px;line-height:16px;font-size:12.5px;color:#959595;transform:scaleX(0.835);transform-origin:0 50%">USDIDR</span>
<span style="right:94px;top:442px;line-height:16px;font-size:12.5px;color:#000;transform:scaleX(0.925);transform-origin:100% 50%">76.711</span>
<span style="right:50px;top:442px;line-height:16px;font-size:12.5px;color:#000;transform:scaleX(0.902);transform-origin:100% 50%">76.726</span>
<span style="right:4.5px;top:442px;line-height:16px;font-size:12.5px;color:#0000f0;transform:scaleX(0.927);transform-origin:100% 50%">0.11%</span>
<span style="left:21.5px;top:442px;line-height:16px;font-size:12.5px;color:#959595;transform:scaleX(0.835);transform-origin:0 50%">USDINR</span>
<span style="right:94px;top:462px;line-height:16px;font-size:12.5px;color:#0000f0;transform:scaleX(0.873);transform-origin:100% 50%">131.2...</span>
<span style="right:50px;top:462px;line-height:16px;font-size:12.5px;color:#0000f0;transform:scaleX(0.873);transform-origin:100% 50%">131.4...</span>
<span style="right:4.5px;top:462px;line-height:16px;font-size:12.5px;color:#0000f0;transform:scaleX(0.903);transform-origin:100% 50%">0.31%</span>
<span style="left:21.5px;top:462px;line-height:16px;font-size:12.5px;color:#959595;transform:scaleX(0.835);transform-origin:0 50%">USDISK</span>
<span style="right:94px;top:482px;line-height:16px;font-size:12.5px;color:#0000f0;transform:scaleX(0.902);transform-origin:100% 50%">0.7083</span>
<span style="right:50px;top:482px;line-height:16px;font-size:12.5px;color:#0000f0;transform:scaleX(0.902);transform-origin:100% 50%">0.7098</span>
<span style="right:4.5px;top:482px;line-height:16px;font-size:12.5px;color:#000;transform:scaleX(0.903);transform-origin:100% 50%">0.00%</span>
<span style="left:21.5px;top:482px;line-height:16px;font-size:12.5px;color:#959595;transform:scaleX(0.835);transform-origin:0 50%">USDJOD</span>
<span style="right:94px;top:502px;line-height:16px;font-size:12.5px;color:#0000f0;transform:scaleX(0.893);transform-origin:100% 50%">115.5...</span>
<span style="right:50px;top:502px;line-height:16px;font-size:12.5px;color:#0000f0;transform:scaleX(0.893);transform-origin:100% 50%">116.1...</span>
<span style="right:4.5px;top:502px;line-height:16px;font-size:12.5px;color:#0000f0;transform:scaleX(0.903);transform-origin:100% 50%">0.09%</span>
<span style="left:21.5px;top:502px;line-height:16px;font-size:12.5px;color:#959595;transform:scaleX(0.835);transform-origin:0 50%">USDKES</span>
<span style="right:94px;top:522px;line-height:16px;font-size:12.5px;color:#0000f0;transform:scaleX(0.873);transform-origin:100% 50%">82.35...</span>
<span style="right:50px;top:522px;line-height:16px;font-size:12.5px;color:#0000f0;transform:scaleX(0.873);transform-origin:100% 50%">83.12...</span>
<span style="right:4.5px;top:522px;line-height:16px;font-size:12.5px;color:#f00000;transform:scaleX(0.906);transform-origin:100% 50%">-1.73%</span>
<span style="left:21.5px;top:522px;line-height:16px;font-size:12.5px;color:#959595;transform:scaleX(0.835);transform-origin:0 50%">USDKGS</span>
<span style="right:94px;top:542px;line-height:16px;font-size:12.5px;color:#0000f0;transform:scaleX(0.873);transform-origin:100% 50%">1275....</span>
<span style="right:50px;top:542px;line-height:16px;font-size:12.5px;color:#0000f0;transform:scaleX(0.873);transform-origin:100% 50%">1276....</span>
<span style="right:4.5px;top:542px;line-height:16px;font-size:12.5px;color:#0000f0;transform:scaleX(0.903);transform-origin:100% 50%">0.72%</span>
<span style="left:21.5px;top:542px;line-height:16px;font-size:12.5px;color:#959595;transform:scaleX(0.835);transform-origin:0 50%">USDKRW</span>
<span style="right:94px;top:562px;line-height:16px;font-size:12.5px;color:#0000f0;transform:scaleX(0.902);transform-origin:100% 50%">0.3065</span>
<span style="right:50px;top:562px;line-height:16px;font-size:12.5px;color:#0000f0;transform:scaleX(0.902);transform-origin:100% 50%">0.3074</span>
<span style="right:4.5px;top:562px;line-height:16px;font-size:12.5px;color:#0000f0;transform:scaleX(0.903);transform-origin:100% 50%">0.20%</span>
<span style="left:21.5px;top:562px;line-height:16px;font-size:12.5px;color:#959595;transform:scaleX(0.835);transform-origin:0 50%">USDKWD</span>
</div>
<div style="left:92px;top:131px;width:1px;height:24px;background:#e4e4e4;"></div>
<div style="left:136px;top:131px;width:1px;height:24px;background:#e4e4e4;"></div>
<div style="left:180px;top:131px;width:1px;height:24px;background:#e4e4e4;"></div>
<div style="left:5px;top:724px;width:239px;height:1px;background:#000;"></div>
<div style="left:7px;top:724px;width:46px;height:20px;background:#fff;border:1px solid #000;border-top:none;box-shadow:1px 1px 0 #8c8c8c;"></div>
<span style="left:17px;top:725.5px;line-height:16px;height:16px;font-size:13px;transform:scaleX(0.961);transform-origin:0 50%;">銘柄</span>
<span style="left:63px;top:725.5px;line-height:16px;height:16px;font-size:13px;color:#8c8c8c;">詳細</span>
<span style="left:97px;top:725.0px;line-height:16px;height:16px;font-size:13px;color:#666;">|</span>
<span style="left:108px;top:725.5px;line-height:16px;height:16px;font-size:13px;color:#8c8c8c;transform:scaleX(0.783);transform-origin:0 50%;">プライスボード</span>
<span style="left:186px;top:725.0px;line-height:16px;height:16px;font-size:13px;color:#666;">|</span>
<span style="left:197px;top:725.5px;line-height:16px;height:16px;font-size:13px;color:#8c8c8c;transform:scaleX(0.683);transform-origin:0 50%;">ティック</span>
<div style="left:4px;top:752px;width:226px;height:13px;background:linear-gradient(90deg,#b2c6dc,#bccde2 60%,#c4d4e6);"></div>
<span style="left:7px;top:750.5px;line-height:16px;height:16px;transform:scaleX(0.766);transform-origin:0 50%;">ナビゲータ</span>
<svg style="left:235px;top:755px;" width="7" height="7" viewBox="0 0 7 7"><path d="M0.8 0.8 L6.2 6.2 M6.2 0.8 L0.8 6.2" stroke="#000" stroke-width="1.6"/></svg>
<div style="left:0px;top:749px;width:247px;height:1px;background:#fafafa;"></div>
<div style="left:5px;top:766px;width:238px;height:388px;background:#fff;border-top:1px solid #b8b8b8;border-left:1px solid #b8b8b8;"></div>
<div style="left:243px;top:766px;width:1px;height:386px;background:#dcdcdc;"></div>
<svg style="left:0px;top:0px;" width="250" height="1000" viewBox="0 0 250 1000"><path d="M17.5 784 V977 M38.5 804 V837" stroke="#a0a0a0" stroke-dasharray="1 1"/><rect x="13" y="792.5" width="9" height="9" fill="#fff" stroke="#919191"/><path d="M15.5 797.0 H19.5" stroke="#2a4a9a"/><path d="M23 797.0 H28" stroke="#a0a0a0" stroke-dasharray="1 1"/><rect x="34" y="812.5" width="9" height="9" fill="#fff" stroke="#919191"/><path d="M36.5 817.0 H40.5" stroke="#2a4a9a"/><path d="M38.5 815.0 V819.0" stroke="#2a4a9a"/><path d="M44 817.0 H49" stroke="#a0a0a0" stroke-dasharray="1 1"/><rect x="34" y="832.5" width="9" height="9" fill="#fff" stroke="#919191"/><path d="M36.5 837.0 H40.5" stroke="#2a4a9a"/><path d="M38.5 835.0 V839.0" stroke="#2a4a9a"/><path d="M44 837.0 H49" stroke="#a0a0a0" stroke-dasharray="1 1"/><rect x="13" y="852.5" width="9" height="9" fill="#fff" stroke="#919191"/><path d="M15.5 857.0 H19.5" stroke="#2a4a9a"/><path d="M17.5 855.0 V859.0" stroke="#2a4a9a"/><path d="M23 857.0 H28" stroke="#a0a0a0" stroke-dasharray="1 1"/><rect x="13" y="872.5" width="9" height="9" fill="#fff" stroke="#919191"/><path d="M15.5 877.0 H19.5" stroke="#2a4a9a"/><path d="M17.5 875.0 V879.0" stroke="#2a4a9a"/><path d="M23 877.0 H28" stroke="#a0a0a0" stroke-dasharray="1 1"/><rect x="13" y="892.5" width="9" height="9" fill="#fff" stroke="#919191"/><path d="M15.5 897.0 H19.5" stroke="#2a4a9a"/><path d="M17.5 895.0 V899.0" stroke="#2a4a9a"/><path d="M23 897.0 H28" stroke="#a0a0a0" stroke-dasharray="1 1"/><rect x="13" y="932.5" width="9" height="9" fill="#fff" stroke="#919191"/><path d="M15.5 937.0 H19.5" stroke="#2a4a9a"/><path d="M17.5 935.0 V939.0" stroke="#2a4a9a"/><path d="M23 937.0 H28" stroke="#a0a0a0" stroke-dasharray="1 1"/><rect x="13" y="952.5" width="9" height="9" fill="#fff" stroke="#919191"/><path d="M15.5 957.0 H19.5" stroke="#2a4a9a"/><path d="M17.5 955.0 V959.0" stroke="#2a4a9a"/><path d="M23 957.0 H28" stroke="#a0a0a0" stroke-dasharray="1 1"/><rect x="13" y="972.5" width="9" height="9" fill="#fff" stroke="#919191"/><path d="M15.5 977.0 H19.5" stroke="#2a4a9a"/><path d="M17.5 975.0 V979.0" stroke="#2a4a9a"/><path d="M23 977.0 H28" stroke="#a0a0a0" stroke-dasharray="1 1"/><path d="M18 917.0 H28" stroke="#a0a0a0" stroke-dasharray="1 1"/><path d="M17 769.5 L23.5 772.5 V779.5 L17 783.5 L10.5 779.5 V772.5 Z" fill="#3a9ad9"/><path d="M10.5 772.5 L17 775.5 V783.5 L10.5 779.5 Z" fill="#f4b400"/><path d="M23.5 772.5 L17 775.5 V783.5 L23.5 779.5 Z" fill="#21a038"/><path d="M17 769.5 L23.5 772.5 L17 775.5 L10.5 772.5 Z" fill="#3a9ad9"/><path d="M14 774.5 L17 776.0 V779.5 L14 778.0 Z" fill="#fff"/><circle cx="41" cy="793.5" r="3" stroke="#2272b4" fill="#e8f2fb" stroke-width="1.2"/><path d="M35.5 802.5 Q35.5 797.5 41 797.5 Q46.5 797.5 46.5 802.5 Z" stroke="#2272b4" fill="#e8f2fb" stroke-width="1.2"/><circle cx="35" cy="795.0" r="2.2" stroke="#2272b4" fill="#fff" stroke-width="1.1"/><path d="M31 802.5 Q31 798.5 35 798.5" stroke="#2272b4" fill="none" stroke-width="1.1"/><rect x="52.6" y="810.6" width="13" height="7" rx="1" stroke="#18a018" fill="#eaf7ea" stroke-width="1.2"/><path d="M55 814.0 H58 M61 814.0 H63.5" stroke="#18a018" stroke-width="1.1"/><path d="M59 817.5 V821.0 M53 821.0 H65.5" stroke="#18a018" stroke-width="1.2"/><rect x="52.6" y="830.6" width="13" height="7" rx="1" stroke="#18a018" fill="#eaf7ea" stroke-width="1.2"/><path d="M55 834.0 H58 M61 834.0 H63.5" stroke="#18a018" stroke-width="1.1"/><path d="M59 837.5 V841.0 M53 841.0 H65.5" stroke="#18a018" stroke-width="1.2"/><path d="M32 858.5 Q35 850.5 38 856.5 Q40 860.5 42 855.5 L45.5 852.5" stroke="#2272b4" fill="none" stroke-width="1.2"/><path d="M32 861.5 L36 856.5 L40 858.5 L45 854.5" stroke="#18a018" fill="none" stroke-width="1" stroke-dasharray="2 1"/><path d="M31.5 874.0 L39 870.5 L46.5 874.0 L39 877.5 Z" stroke="#2272b4" fill="#e8f2fb" stroke-width="1.2" stroke-linejoin="round"/><path d="M34.5 876.0 V880.5 Q39 883.5 43.5 880.5 V876.0" stroke="#2272b4" fill="none" stroke-width="1.2"/><path d="M32.5 874.5 V881.5" stroke="#2272b4" stroke-width="1.1"/><path d="M35 891.0 H44 V899.5 H42.5 V902.0 H33 V899.5 H35 Z" fill="#f7c600" stroke="#e0a000" stroke-width="0.9"/><circle cx="38.5" cy="916.5" r="5.6" stroke="#2272b4" fill="#e8f2fb" stroke-width="1.3" stroke-dasharray="3 1.4"/><circle cx="38.5" cy="916.5" r="4.6" stroke="#2272b4" fill="#e8f2fb" stroke-width="1"/><path d="M37 914.0 L41 916.5 L37 919.0 Z" stroke="#2272b4" fill="none" stroke-width="1"/><path d="M34 934.0 H43.5 L44.5 942.5 H33 Z" fill="#f7c600" stroke="#e0a800" stroke-width="0.9"/><path d="M36.3 935.0 V932.5 Q36.3 930.2 38.8 930.2 Q41.3 930.2 41.3 932.5 V935.0" stroke="#c89600" fill="none" stroke-width="1.1"/><circle cx="38.5" cy="956.5" r="1.4" fill="#2272b4"/><path d="M35.5 953.5 Q33.8 956.5 35.5 959.5 M41.5 953.5 Q43.2 956.5 41.5 959.5 M33 952.0 Q30 956.5 33 961.0 M44 952.0 Q47 956.5 44 961.0" stroke="#2272b4" fill="none" stroke-width="1.1"/><path d="M35 978.0 Q32 978.0 32 975.5 Q32 973.0 35 973.0 Q36 969.5 39.5 969.7 Q42.8 969.8 43.5 973.0 Q46 973.2 46 975.5 Q46 978.0 43 978.0 Z" stroke="#2272b4" fill="#cfe4f5" stroke-width="1.2"/><path d="M39 978.0 V981.0 M33 981.5 H45" stroke="#2272b4" stroke-width="1.2"/><circle cx="39" cy="981.5" r="1.3" fill="#2272b4"/></svg>
<span style="left:31px;top:768.5px;line-height:16px;height:16px;font-size:12.5px;transform:scaleX(0.854);transform-origin:0 50%;">Exness</span>
<span style="left:52px;top:789.0px;line-height:16px;height:16px;font-size:13px;">口座</span>
<span style="left:73px;top:808.5px;line-height:16px;height:16px;font-size:12.5px;transform:scaleX(0.887);transform-origin:0 50%;">Exness-MT5Real</span>
<span style="left:73px;top:828.5px;line-height:16px;height:16px;font-size:12.5px;font-weight:bold;transform:scaleX(0.922);transform-origin:0 50%;">Exness-MT5Real5</span>
<span style="left:52px;top:849.0px;line-height:16px;height:16px;font-size:13px;">指標</span>
<span style="left:52px;top:869.0px;line-height:16px;height:16px;font-size:13px;transform:scaleX(0.795);transform-origin:0 50%;">エキスパートアドバイザ(EA)</span>
<span style="left:52px;top:889.0px;line-height:16px;height:16px;font-size:13px;transform:scaleX(0.723);transform-origin:0 50%;">スクリプト</span>
<span style="left:52px;top:909.0px;line-height:16px;height:16px;font-size:13px;transform:scaleX(0.788);transform-origin:0 50%;">サービス</span>
<span style="left:52px;top:929.0px;line-height:16px;height:16px;font-size:13px;transform:scaleX(0.754);transform-origin:0 50%;">マーケット</span>
<span style="left:52px;top:949.0px;line-height:16px;height:16px;font-size:13px;transform:scaleX(0.807);transform-origin:0 50%;">シグナル</span>
<span style="left:52px;top:968.5px;line-height:16px;height:16px;font-size:12.5px;transform:scaleX(0.8);transform-origin:0 50%;">VPS</span>
<div style="left:5px;top:1154px;width:239px;height:1px;background:#000;"></div>
<div style="left:7px;top:1154px;width:46px;height:20px;background:#fff;border:1px solid #000;border-top:none;box-shadow:1px 1px 0 #8c8c8c;"></div>
<span style="left:18px;top:1156.0px;line-height:16px;height:16px;font-size:13px;transform:scaleX(0.961);transform-origin:0 50%;">一般</span>
<span style="left:62px;top:1156.0px;line-height:16px;height:16px;font-size:13px;color:#8c8c8c;transform:scaleX(0.877);transform-origin:0 50%;">お気に入り</span>
<div style="left:244px;top:113px;width:3px;height:1068px;background:#f0f0f0;"></div>
<div style="left:247px;top:113px;width:1265px;height:1px;background:#a0a0a0;"></div>
<div style="left:247px;top:114px;width:1265px;height:1px;background:#696969;"></div>
<div style="left:247px;top:113px;width:1px;height:1047px;background:#a0a0a0;"></div>
<div style="left:248px;top:114px;width:1px;height:1046px;background:#696969;"></div>
<div style="left:1510px;top:115px;width:1px;height:1045px;background:#8a8a8a;"></div>
<div style="left:1511px;top:113px;width:1px;height:1047px;background:#e8e8e8;"></div>
<div style="left:249px;top:116px;width:1261px;height:527px;background:#f0f0f0;"></div>
<div style="left:249px;top:643px;width:1261px;height:2px;background:#626262;"></div>
<div style="left:254px;top:636px;width:1250px;height:1px;background:#fafafa;"></div>
<svg style="left:259px;top:122px;" width="12" height="15" viewBox="0 0 12 15"><path d="M2.5 0 V14 M9.5 -1 V12" stroke="#18a018" stroke-width="1.2"/><rect x="0.6" y="3.5" width="3.8" height="7" fill="#f0f0f0" stroke="#18a018" stroke-width="1.2"/><rect x="7.6" y="2.5" width="3.8" height="7" fill="#f0f0f0" stroke="#18a018" stroke-width="1.2"/></svg>
<span style="left:276px;top:121.5px;line-height:16px;height:16px;font-size:13.5px;color:#8a8282;transform:scaleX(0.848);transform-origin:0 50%;">USDJPYm,Monthly</span>
<svg style="left:1405px;top:124px;" width="90" height="14" viewBox="0 0 90 14"><path d="M4 11.5 H13" stroke="#a8a8a8"/><rect x="40.5" y="3.5" width="8" height="8" fill="none" stroke="#a8a8a8"/><path d="M76.5 3.5 L85 12 M85 3.5 L76.5 12" stroke="#a8a8a8"/></svg>
<div style="left:252px;top:143px;width:1251px;height:493px;background:#000;border-left:2px solid #a8a8a8;border-top:2px solid #a8a8a8;"></div>
<div style="left:253px;top:144px;width:1250px;height:492px;background:#000;border-left:1px solid #5a5a5a;border-top:1px solid #5a5a5a;"></div>
<svg style="left:0px;top:0px;" width="1514" height="640" viewBox="0 0 1514 640"><g fill="none" stroke="#778899" stroke-dasharray="3 3"><path d="M289.5 148 V615"/><path d="M321.5 148 V615"/><path d="M353.5 148 V615"/><path d="M385.5 148 V615"/><path d="M417.5 148 V615"/><path d="M449.5 148 V615"/><path d="M481.5 148 V615"/><path d="M513.5 148 V615"/><path d="M545.5 148 V615"/><path d="M577.5 148 V615"/><path d="M609.5 148 V615"/><path d="M641.5 148 V615"/><path d="M673.5 148 V615"/><path d="M705.5 148 V615"/><path d="M737.5 148 V615"/><path d="M769.5 148 V615"/><path d="M801.5 148 V615"/><path d="M833.5 148 V615"/><path d="M865.5 148 V615"/><path d="M897.5 148 V615"/><path d="M929.5 148 V615"/><path d="M961.5 148 V615"/><path d="M993.5 148 V615"/><path d="M1025.5 148 V615"/><path d="M1057.5 148 V615"/><path d="M1089.5 148 V615"/><path d="M1121.5 148 V615"/><path d="M1153.5 148 V615"/><path d="M1185.5 148 V615"/><path d="M1217.5 148 V615"/><path d="M1249.5 148 V615"/><path d="M1281.5 148 V615"/><path d="M1313.5 148 V615"/><path d="M1345.5 148 V615"/><path d="M1377.5 148 V615"/><path d="M1409.5 148 V615"/><path d="M1441.5 148 V615"/><path d="M258 167.5 H1450"/><path d="M258 199.5 H1450"/><path d="M258 231.5 H1450"/><path d="M258 263.5 H1450"/><path d="M258 295.5 H1450"/><path d="M258 327.5 H1450"/><path d="M258 359.5 H1450"/><path d="M258 391.5 H1450"/><path d="M258 423.5 H1450"/><path d="M258 455.5 H1450"/><path d="M258 487.5 H1450"/><path d="M258 519.5 H1450"/><path d="M258 551.5 H1450"/><path d="M258 583.5 H1450"/></g><path d="M258 161.5 H1450" stroke="#778899"/><g shape-rendering="crispEdges"><path d="M258 420.5 H262.5 V433.5 H258" fill="none" stroke="#00ff00"/><path d="M273.5 416 V449" stroke="#00ff00" stroke-width="1"/><rect x="268.5" y="420.5" width="10" height="11" fill="#fff" stroke="#00ff00" stroke-width="1"/><path d="M289.5 394 V441" stroke="#00ff00" stroke-width="1"/><rect x="284.5" y="394.5" width="10" height="37" fill="#000" stroke="#00ff00" stroke-width="1"/><path d="M305.5 384 V427" stroke="#00ff00" stroke-width="1"/><rect x="300.5" y="394.5" width="10" height="13" fill="#fff" stroke="#00ff00" stroke-width="1"/><path d="M321.5 389 V415" stroke="#00ff00" stroke-width="1"/><rect x="316.5" y="398.5" width="10" height="9" fill="#000" stroke="#00ff00" stroke-width="1"/><path d="M337.5 394 V452" stroke="#00ff00" stroke-width="1"/><rect x="332.5" y="395.5" width="10" height="56" fill="#fff" stroke="#00ff00" stroke-width="1"/><path d="M353.5 445 V501" stroke="#00ff00" stroke-width="1"/><rect x="348.5" y="449.5" width="10" height="11" fill="#f0f0f0" stroke="#00ff00" stroke-width="1"/><path d="M369.5 420 V470" stroke="#00ff00" stroke-width="1"/><rect x="364.5" y="427.5" width="10" height="33" fill="#000" stroke="#00ff00" stroke-width="1"/><path d="M977.5 160 V300" stroke="#00ff00" stroke-width="1"/><rect x="972.5" y="161.5" width="10" height="138" fill="#000" stroke="#00ff00" stroke-width="1"/><rect x="272" y="591" width="2" height="24" fill="#32cd32"/><rect x="288" y="593" width="2" height="22" fill="#32cd32"/><rect x="304" y="581" width="2" height="34" fill="#32cd32"/><rect x="320" y="586" width="2" height="29" fill="#32cd32"/><rect x="336" y="587" width="2" height="28" fill="#32cd32"/><rect x="352" y="586" width="2" height="29" fill="#32cd32"/><rect x="368" y="590" width="2" height="25" fill="#32cd32"/><path d="M257.5 619 V148.5 H1450.5 V616 M257 615.5 H1451 M321.5 615 V619" stroke="#fff" fill="none"/><path d="M1451 167.5 H1455" stroke="#fff"/><path d="M1451 199.5 H1455" stroke="#fff"/><path d="M1451 231.5 H1455" stroke="#fff"/><path d="M1451 263.5 H1455" stroke="#fff"/><path d="M1451 295.5 H1455" stroke="#fff"/><path d="M1451 327.5 H1455" stroke="#fff"/><path d="M1451 359.5 H1455" stroke="#fff"/><path d="M1451 391.5 H1455" stroke="#fff"/><path d="M1451 423.5 H1455" stroke="#fff"/><path d="M1451 455.5 H1455" stroke="#fff"/><path d="M1451 487.5 H1455" stroke="#fff"/><path d="M1451 519.5 H1455" stroke="#fff"/><path d="M1451 551.5 H1455" stroke="#fff"/><path d="M1451 583.5 H1455" stroke="#fff"/></g><rect x="1453" y="156" width="39" height="11" fill="#778899"/><rect x="262.5" y="154.5" width="8" height="11" fill="#fff" stroke="#e03030" stroke-width="1"/><rect x="270.5" y="154.5" width="8" height="11" fill="#fff" stroke="#1a5fb0" stroke-width="1"/><path d="M264.0 157.5 H269.5 M264.0 160.0 H269.5 M264.0 162.5 H269.5" stroke="#e03030" stroke-width="1.2"/><path d="M271.5 157.5 H277.0 M271.5 160.0 H277.0 M271.5 162.5 H277.0" stroke="#1a5fb0" stroke-width="1.2"/></svg>
<span style="left:282px;top:151.0px;line-height:16px;height:16px;font-size:9.5px;color:#fff;transform:scaleX(1.013);transform-origin:0 50%;">USDJPYm, Monthly:  US Dollar vs Japanese Yen</span>
<span style="left:1457px;top:159.0px;line-height:16px;height:16px;font-size:9.5px;color:#fff;transform:scaleX(0.903);transform-origin:0 50%;">130.760</span>
<span style="left:1457px;top:191.0px;line-height:16px;height:16px;font-size:9.5px;color:#fff;transform:scaleX(0.903);transform-origin:0 50%;">128.370</span>
<span style="left:1457px;top:223.0px;line-height:16px;height:16px;font-size:9.5px;color:#fff;transform:scaleX(0.903);transform-origin:0 50%;">125.980</span>
<span style="left:1457px;top:255.0px;line-height:16px;height:16px;font-size:9.5px;color:#fff;transform:scaleX(0.903);transform-origin:0 50%;">123.590</span>
<span style="left:1457px;top:287.0px;line-height:16px;height:16px;font-size:9.5px;color:#fff;transform:scaleX(0.903);transform-origin:0 50%;">121.200</span>
<span style="left:1457px;top:319.0px;line-height:16px;height:16px;font-size:9.5px;color:#fff;transform:scaleX(0.922);transform-origin:0 50%;">118.810</span>
<span style="left:1457px;top:351.0px;line-height:16px;height:16px;font-size:9.5px;color:#fff;transform:scaleX(0.922);transform-origin:0 50%;">116.420</span>
<span style="left:1457px;top:383.0px;line-height:16px;height:16px;font-size:9.5px;color:#fff;transform:scaleX(0.922);transform-origin:0 50%;">114.030</span>
<span style="left:1457px;top:415.0px;line-height:16px;height:16px;font-size:9.5px;color:#fff;transform:scaleX(0.941);transform-origin:0 50%;">111.640</span>
<span style="left:1457px;top:447.0px;line-height:16px;height:16px;font-size:9.5px;color:#fff;transform:scaleX(0.903);transform-origin:0 50%;">109.250</span>
<span style="left:1457px;top:479.0px;line-height:16px;height:16px;font-size:9.5px;color:#fff;transform:scaleX(0.903);transform-origin:0 50%;">106.860</span>
<span style="left:1457px;top:511.0px;line-height:16px;height:16px;font-size:9.5px;color:#fff;transform:scaleX(0.903);transform-origin:0 50%;">104.470</span>
<span style="left:1457px;top:543.0px;line-height:16px;height:16px;font-size:9.5px;color:#fff;transform:scaleX(0.903);transform-origin:0 50%;">102.080</span>
<span style="left:1457px;top:575.0px;line-height:16px;height:16px;font-size:9.5px;color:#fff;transform:scaleX(0.912);transform-origin:0 50%;">99.690</span>
<div style="left:1453px;top:156px;width:39px;height:11px;background:#778899;"></div>
<span style="left:1457px;top:153.0px;line-height:16px;height:16px;font-size:9.5px;color:#000;transform:scaleX(0.903);transform-origin:0 50%;">131.213</span>
<span style="left:257px;top:617.0px;line-height:16px;height:16px;font-size:9.5px;color:#fff;transform:scaleX(0.935);transform-origin:0 50%;">1 Jul 2018</span>
<span style="left:321px;top:617.0px;line-height:16px;height:16px;font-size:9.5px;color:#fff;transform:scaleX(0.947);transform-origin:0 50%;">1 Nov 2018</span>
<div style="left:249px;top:645px;width:1261px;height:515px;background:#f0f0f0;border-left:4px solid #b2b2b2;"></div>
<div style="left:252px;top:645px;width:1px;height:515px;background:#8a8a8a;"></div>
<svg style="left:264px;top:651px;" width="12" height="15" viewBox="0 0 12 15"><path d="M2.5 0 V14 M9.5 -1 V12" stroke="#18a018" stroke-width="1.2"/><rect x="0.6" y="3.5" width="3.8" height="7" fill="#f0f0f0" stroke="#18a018" stroke-width="1.2"/><rect x="7.6" y="2.5" width="3.8" height="7" fill="#f0f0f0" stroke="#18a018" stroke-width="1.2"/></svg>
<span style="left:281px;top:650.5px;line-height:16px;height:16px;font-size:13.5px;color:#8a8282;transform:scaleX(0.786);transform-origin:0 50%;">BTCUSDm,H1</span>
<svg style="left:1405px;top:653px;" width="90" height="14" viewBox="0 0 90 14"><path d="M4 11.5 H13" stroke="#a8a8a8"/><rect x="40.5" y="3.5" width="8" height="8" fill="none" stroke="#a8a8a8"/><path d="M76.5 3.5 L85 12 M85 3.5 L76.5 12" stroke="#a8a8a8"/></svg>
<div style="left:257px;top:673px;width:1246px;height:485px;background:#000;border-left:2px solid #a8a8a8;border-top:2px solid #a8a8a8;"></div>
<div style="left:258px;top:674px;width:1245px;height:484px;background:#000;border-left:1px solid #5a5a5a;border-top:1px solid #5a5a5a;"></div>
<svg style="left:0px;top:0px;" width="1514" height="1160" viewBox="0 0 1514 1160"><g fill="none" stroke="#778899" stroke-dasharray="3 3"><path d="M294.5 677 V1158"/><path d="M326.5 677 V1158"/><path d="M358.5 677 V1158"/><path d="M390.5 677 V1158"/><path d="M422.5 677 V1158"/><path d="M454.5 677 V1158"/><path d="M486.5 677 V1158"/><path d="M518.5 677 V1158"/><path d="M550.5 677 V1158"/><path d="M582.5 677 V1158"/><path d="M614.5 677 V1158"/><path d="M646.5 677 V1158"/><path d="M678.5 677 V1158"/><path d="M710.5 677 V1158"/><path d="M742.5 677 V1158"/><path d="M774.5 677 V1158"/><path d="M806.5 677 V1158"/><path d="M838.5 677 V1158"/><path d="M870.5 677 V1158"/><path d="M902.5 677 V1158"/><path d="M934.5 677 V1158"/><path d="M966.5 677 V1158"/><path d="M998.5 677 V1158"/><path d="M1030.5 677 V1158"/><path d="M1062.5 677 V1158"/><path d="M1094.5 677 V1158"/><path d="M1126.5 677 V1158"/><path d="M1158.5 677 V1158"/><path d="M1190.5 677 V1158"/><path d="M1222.5 677 V1158"/><path d="M1254.5 677 V1158"/><path d="M1286.5 677 V1158"/><path d="M1318.5 677 V1158"/><path d="M1350.5 677 V1158"/><path d="M1382.5 677 V1158"/><path d="M1414.5 677 V1158"/><path d="M263 695.5 H1445"/><path d="M263 727.5 H1445"/><path d="M263 759.5 H1445"/><path d="M263 791.5 H1445"/><path d="M263 823.5 H1445"/><path d="M263 855.5 H1445"/><path d="M263 887.5 H1445"/><path d="M263 919.5 H1445"/><path d="M263 951.5 H1445"/><path d="M263 983.5 H1445"/><path d="M263 1015.5 H1445"/><path d="M263 1047.5 H1445"/><path d="M263 1079.5 H1445"/><path d="M263 1111.5 H1445"/><path d="M263 1143.5 H1445"/></g><path d="M263 942.5 H1445" stroke="#778899"/><g shape-rendering="crispEdges"><path d="M263 946.5 H267.5 V995.5 H263" fill="none" stroke="#00ff00"/><path d="M278.5 900 V968" stroke="#00ff00" stroke-width="1"/><rect x="273.5" y="947.5" width="10" height="13" fill="#fff" stroke="#00ff00" stroke-width="1"/><path d="M294.5 857 V969" stroke="#00ff00" stroke-width="1"/><rect x="289.5" y="885.5" width="10" height="75" fill="#000" stroke="#00ff00" stroke-width="1"/><path d="M310.5 868 V907" stroke="#00ff00" stroke-width="1"/><rect x="305.5" y="885.5" width="10" height="12" fill="#fff" stroke="#00ff00" stroke-width="1"/><path d="M326.5 760 V909" stroke="#00ff00" stroke-width="1"/><rect x="321.5" y="825.5" width="10" height="71" fill="#000" stroke="#00ff00" stroke-width="1"/><path d="M342.5 755 V845" stroke="#00ff00" stroke-width="1"/><rect x="337.5" y="773.5" width="10" height="51" fill="#000" stroke="#00ff00" stroke-width="1"/><path d="M358.5 759 V800" stroke="#00ff00" stroke-width="1"/><rect x="353.5" y="772.5" width="10" height="10" fill="#e8e8e8" stroke="#00ff00" stroke-width="1"/><path d="M1350.5 832 V866" stroke="#00ff00" stroke-width="1"/><rect x="1345.5" y="839.5" width="10" height="13" fill="#dcdcdc" stroke="#00ff00" stroke-width="1"/><path d="M1366.5 841 V866" stroke="#00ff00"/><rect x="1361" y="852" width="11" height="2" fill="#00ff00"/><path d="M1382.5 830 V882" stroke="#00ff00" stroke-width="1"/><rect x="1377.5" y="852.5" width="10" height="21" fill="#fff" stroke="#00ff00" stroke-width="1"/><path d="M1398.5 873 V947" stroke="#00ff00" stroke-width="1"/><rect x="1393.5" y="873.5" width="10" height="66" fill="#fff" stroke="#00ff00" stroke-width="1"/><path d="M1414.5 917 V974" stroke="#00ff00" stroke-width="1"/><rect x="1409.5" y="939.5" width="10" height="3" fill="#fff" stroke="#00ff00" stroke-width="1"/><rect x="259" y="675" width="3" height="483" fill="#000"/><path d="M262.5 1158 V677.5 H1445.5 V1158" stroke="#fff" fill="none"/><path d="M1446 695.5 H1450" stroke="#fff"/><path d="M1446 727.5 H1450" stroke="#fff"/><path d="M1446 759.5 H1450" stroke="#fff"/><path d="M1446 791.5 H1450" stroke="#fff"/><path d="M1446 823.5 H1450" stroke="#fff"/><path d="M1446 855.5 H1450" stroke="#fff"/><path d="M1446 887.5 H1450" stroke="#fff"/><path d="M1446 919.5 H1450" stroke="#fff"/><path d="M1446 951.5 H1450" stroke="#fff"/><path d="M1446 983.5 H1450" stroke="#fff"/><path d="M1446 1015.5 H1450" stroke="#fff"/><path d="M1446 1047.5 H1450" stroke="#fff"/><path d="M1446 1079.5 H1450" stroke="#fff"/><path d="M1446 1111.5 H1450" stroke="#fff"/><path d="M1446 1143.5 H1450" stroke="#fff"/></g><rect x="267.5" y="683.5" width="8" height="11" fill="#fff" stroke="#e03030" stroke-width="1"/><rect x="275.5" y="683.5" width="8" height="11" fill="#fff" stroke="#1a5fb0" stroke-width="1"/><path d="M269.0 686.5 H274.5 M269.0 689.0 H274.5 M269.0 691.5 H274.5" stroke="#e03030" stroke-width="1.2"/><path d="M276.5 686.5 H282.0 M276.5 689.0 H282.0 M276.5 691.5 H282.0" stroke="#1a5fb0" stroke-width="1.2"/></svg>
<span style="left:287.5px;top:680.5px;line-height:16px;height:16px;font-size:9.5px;color:#fff;transform:scaleX(1.041);transform-origin:0 50%;">BTCUSDm, H1:  Bitcoin vs US Dollar</span>
<span style="left:1451px;top:687.0px;line-height:16px;height:16px;font-size:9.5px;color:#fff;transform:scaleX(0.934);transform-origin:0 50%;">40757.80</span>
<span style="left:1451px;top:719.0px;line-height:16px;height:16px;font-size:9.5px;color:#fff;transform:scaleX(0.934);transform-origin:0 50%;">40539.15</span>
<span style="left:1451px;top:751.0px;line-height:16px;height:16px;font-size:9.5px;color:#fff;transform:scaleX(0.934);transform-origin:0 50%;">40320.50</span>
<span style="left:1451px;top:783.0px;line-height:16px;height:16px;font-size:9.5px;color:#fff;transform:scaleX(0.934);transform-origin:0 50%;">40101.85</span>
<span style="left:1451px;top:815.0px;line-height:16px;height:16px;font-size:9.5px;color:#fff;transform:scaleX(0.934);transform-origin:0 50%;">39883.20</span>
<span style="left:1451px;top:847.0px;line-height:16px;height:16px;font-size:9.5px;color:#fff;transform:scaleX(0.934);transform-origin:0 50%;">39664.55</span>
<span style="left:1451px;top:879.0px;line-height:16px;height:16px;font-size:9.5px;color:#fff;transform:scaleX(0.934);transform-origin:0 50%;">39445.90</span>
<span style="left:1451px;top:911.0px;line-height:16px;height:16px;font-size:9.5px;color:#fff;transform:scaleX(0.934);transform-origin:0 50%;">39227.25</span>
<span style="left:1451px;top:943.0px;line-height:16px;height:16px;font-size:9.5px;color:#fff;transform:scaleX(0.934);transform-origin:0 50%;">39008.60</span>
<span style="left:1451px;top:975.0px;line-height:16px;height:16px;font-size:9.5px;color:#fff;transform:scaleX(0.934);transform-origin:0 50%;">38789.95</span>
<span style="left:1451px;top:1007.0px;line-height:16px;height:16px;font-size:9.5px;color:#fff;transform:scaleX(0.934);transform-origin:0 50%;">38571.30</span>
<span style="left:1451px;top:1039.0px;line-height:16px;height:16px;font-size:9.5px;color:#fff;transform:scaleX(0.934);transform-origin:0 50%;">38352.65</span>
<span style="left:1451px;top:1071.0px;line-height:16px;height:16px;font-size:9.5px;color:#fff;transform:scaleX(0.934);transform-origin:0 50%;">38134.00</span>
<span style="left:1451px;top:1103.0px;line-height:16px;height:16px;font-size:9.5px;color:#fff;transform:scaleX(0.934);transform-origin:0 50%;">37915.35</span>
<span style="left:1451px;top:1135.0px;line-height:16px;height:16px;font-size:9.5px;color:#fff;transform:scaleX(0.934);transform-origin:0 50%;">37696.70</span>
<div style="left:1448px;top:937px;width:44px;height:11px;background:#778899;"></div>
<span style="left:1451px;top:934.0px;line-height:16px;height:16px;font-size:9.5px;color:#000;transform:scaleX(0.934);transform-origin:0 50%;">39067.15</span>
<div style="left:247px;top:1158px;width:1264px;height:2px;background:#fff;"></div>
<div style="left:248px;top:1160px;width:1263px;height:1px;background:#000;"></div>
<div style="left:247px;top:1161px;width:1264px;height:20px;background:#f0f0f0;"></div>
<div style="left:247px;top:1160px;width:1px;height:20px;background:#696969;"></div>
<div style="left:0px;top:1179px;width:248px;height:1px;background:#b4b4b4;"></div>
<span style="left:264px;top:1162.5px;line-height:16px;height:16px;font-size:12.5px;color:#6e6e6e;transform:scaleX(0.849);transform-origin:0 50%;">BTCUSDm,H1</span>
<span style="left:360px;top:1162.5px;line-height:16px;height:16px;font-size:12.5px;color:#6e6e6e;transform:scaleX(0.874);transform-origin:0 50%;">ETHUSDm,H1</span>
<span style="left:456px;top:1162.5px;line-height:16px;height:16px;font-size:12.5px;color:#6e6e6e;transform:scaleX(0.89);transform-origin:0 50%;">USOILm,H1</span>
<span style="left:542px;top:1162.5px;line-height:16px;height:16px;font-size:12.5px;color:#6e6e6e;transform:scaleX(0.859);transform-origin:0 50%;">USDJPYm,H1</span>
<div style="left:346px;top:1164px;width:1px;height:13px;background:#7a7a7a;"></div>
<div style="left:443px;top:1164px;width:1px;height:13px;background:#7a7a7a;"></div>
<div style="left:528px;top:1164px;width:1px;height:13px;background:#7a7a7a;"></div>
<div style="left:622px;top:1160px;width:122px;height:21px;background:#f0f0f0;border:1px solid #000;border-top:none;box-shadow:1px 1px 0 #8c8c8c;"></div>
<span style="left:634px;top:1162.0px;line-height:16px;height:16px;font-size:12.5px;transform:scaleX(0.916);transform-origin:0 50%;">USDJPYm,Monthly</span>
<svg style="left:1474px;top:1165px;" width="30" height="11" viewBox="0 0 30 11"><path d="M6 1.5 V9.5 L2 5.5 Z M22 1.5 V9.5 L26 5.5 Z" fill="#b0b0b0"/></svg>
<div style="left:0px;top:1181px;width:1514px;height:1px;background:#fafafa;"></div>
<div style="left:15px;top:1184px;width:1496px;height:1px;background:#a8a8a8;"></div>
<div style="left:15px;top:1184px;width:1px;height:136px;background:#a8a8a8;"></div>
<div style="left:16px;top:1185px;width:1492px;height:113px;background:#fff;"></div>
<div style="left:1508px;top:1185px;width:1px;height:135px;background:#d8d8d8;"></div>
<svg style="left:5px;top:1187px;" width="6" height="6" viewBox="0 0 6 6"><path d="M0.6 0.6 L5.4 5.4 M5.4 0.6 L0.6 5.4" stroke="#000" stroke-width="1.5"/></svg>
<div style="left:2px;top:1198px;width:12px;height:120px;background:linear-gradient(180deg,#dce6f2,#b4c6dc);"></div>
<span style="left:-42px;top:1280px;width:100px;height:14px;line-height:14px;font-size:10.5px;text-align:center;transform:rotate(-90deg) scale(0.88,0.95);transform-origin:50% 50%;">ツールボックス</span>
<span style="left:23px;top:1188.5px;line-height:16px;height:16px;font-size:13px;transform:scaleX(0.961);transform-origin:0 50%;">銘柄</span>
<svg style="left:67px;top:1193px;" width="8" height="6" viewBox="0 0 8 6"><path d="M0 5 H7.5 L3.75 1 Z" fill="#222"/></svg>
<div style="left:195px;top:1185px;width:1px;height:23px;background:#e6e6e6;"></div>
<div style="left:318px;top:1185px;width:1px;height:23px;background:#e6e6e6;"></div>
<div style="left:457px;top:1185px;width:1px;height:23px;background:#e6e6e6;"></div>
<div style="left:595px;top:1185px;width:1px;height:23px;background:#e6e6e6;"></div>
<div style="left:733px;top:1185px;width:1px;height:23px;background:#e6e6e6;"></div>
<div style="left:871px;top:1185px;width:1px;height:23px;background:#e6e6e6;"></div>
<div style="left:1010px;top:1185px;width:1px;height:23px;background:#e6e6e6;"></div>
<div style="left:1148px;top:1185px;width:1px;height:23px;background:#e6e6e6;"></div>
<div style="left:1286px;top:1185px;width:1px;height:23px;background:#e6e6e6;"></div>
<span style="left:202px;top:1188.5px;line-height:16px;height:16px;font-size:13px;transform:scaleX(0.711);transform-origin:0 50%;">チケット</span>
<span style="right:1062px;top:1188.5px;line-height:16px;height:16px;font-size:13px;transform:scaleX(0.961);transform-origin:100% 50%;">時間</span>
<span style="right:924px;top:1188.5px;line-height:16px;height:16px;font-size:13px;transform:scaleX(0.718);transform-origin:100% 50%;">タイプ</span>
<span style="right:786px;top:1188.5px;line-height:16px;height:16px;font-size:13px;transform:scaleX(0.961);transform-origin:100% 50%;">数量</span>
<span style="right:647px;top:1188.5px;line-height:16px;height:16px;font-size:13px;transform:scaleX(0.961);transform-origin:100% 50%;">価格</span>
<span style="right:508px;top:1188.5px;line-height:16px;height:16px;font-size:13px;transform:scaleX(0.966);transform-origin:100% 50%;">決済逆指値(S/L)</span>
<span style="right:370px;top:1188.5px;line-height:16px;height:16px;font-size:13px;transform:scaleX(0.952);transform-origin:100% 50%;">決済指値(T/P)</span>
<span style="right:232px;top:1188.5px;line-height:16px;height:16px;font-size:13px;transform:scaleX(0.961);transform-origin:100% 50%;">価格</span>
<span style="right:11px;top:1188.5px;line-height:16px;height:16px;font-size:13px;transform:scaleX(0.961);transform-origin:100% 50%;">損益</span>
<div style="left:16px;top:1209px;width:1492px;height:20px;background:#c8c8c8;"></div>
<div style="left:24px;top:1218px;width:3px;height:3px;background:#222;border-radius:2px;"></div>
<span style="left:38px;top:1211.0px;line-height:16px;height:16px;font-size:12.5px;font-weight:bold;transform:scaleX(1.034);transform-origin:0 50%;">残高: 100 000 JPY  有効証拠金: 100 000  余剰証拠金: 100 000</span>
<span style="right:27px;top:1211.0px;line-height:16px;height:16px;font-size:12.5px;font-weight:bold;transform:scaleX(1.027);transform-origin:100% 50%;">0.00</span>
<svg style="left:1492px;top:1212px;" width="14" height="14" viewBox="0 0 14 14"><circle cx="7" cy="7" r="6.5" fill="#e4f4e4"/><path d="M7 2.5 V11.5 M2.5 7 H11.5" stroke="#18a018" stroke-width="2"/></svg>
<div style="left:16px;top:1298px;width:1492px;height:1px;background:#000;"></div>
<div style="left:19px;top:1298px;width:46px;height:20px;background:#fff;border:1px solid #000;border-top:none;box-shadow:1px 1px 0 #8c8c8c;"></div>
<span style="left:29px;top:1300.0px;line-height:16px;height:16px;font-size:13px;transform:scaleX(0.961);transform-origin:0 50%;">取引</span>
<span style="left:75px;top:1300.0px;line-height:16px;height:16px;font-size:13px;color:#8a8a8a;transform:scaleX(0.98);transform-origin:0 50%;">運用比率</span>
<span style="left:147px;top:1300.0px;line-height:16px;height:16px;font-size:13px;color:#8a8a8a;">口座履歴</span>
<span style="left:219px;top:1300.0px;line-height:16px;height:16px;font-size:13px;color:#8a8a8a;transform:scaleX(0.779);transform-origin:0 50%;">ニュース</span>
<span style="left:291px;top:1300.0px;line-height:16px;height:16px;font-size:13px;color:#8a8a8a;transform:scaleX(0.846);transform-origin:0 50%;">受信トレイ</span>
<span style="left:372px;top:1300.0px;line-height:16px;height:16px;font-size:13px;color:#8a8a8a;transform:scaleX(0.813);transform-origin:0 50%;">指標カレンダー</span>
<span style="left:467px;top:1300.0px;line-height:16px;height:16px;font-size:13px;color:#8a8a8a;transform:scaleX(0.961);transform-origin:0 50%;">会社</span>
<span style="left:512px;top:1300.0px;line-height:16px;height:16px;font-size:13px;color:#8a8a8a;transform:scaleX(0.769);transform-origin:0 50%;">アラート</span>
<span style="left:572px;top:1300.0px;line-height:16px;height:16px;font-size:13px;color:#8a8a8a;transform:scaleX(0.961);transform-origin:0 50%;">記事</span>
<span style="left:624px;top:1300.0px;line-height:16px;height:16px;font-size:13px;color:#8a8a8a;transform:scaleX(0.708);transform-origin:0 50%;">ライブラリ</span>
<span style="left:690px;top:1300.0px;line-height:16px;height:16px;font-size:13px;color:#8a8a8a;transform:scaleX(0.799);transform-origin:0 50%;">エキスパート</span>
<span style="left:772px;top:1300.0px;line-height:16px;height:16px;font-size:13px;color:#8a8a8a;transform:scaleX(0.865);transform-origin:0 50%;">操作ログ</span>
<div style="left:137px;top:1302px;width:1px;height:13px;background:#6a6a6a;"></div>
<div style="left:209px;top:1302px;width:1px;height:13px;background:#6a6a6a;"></div>
<div style="left:281px;top:1302px;width:1px;height:13px;background:#6a6a6a;"></div>
<div style="left:362px;top:1302px;width:1px;height:13px;background:#6a6a6a;"></div>
<div style="left:457px;top:1302px;width:1px;height:13px;background:#6a6a6a;"></div>
<div style="left:502px;top:1302px;width:1px;height:13px;background:#6a6a6a;"></div>
<div style="left:562px;top:1302px;width:1px;height:13px;background:#6a6a6a;"></div>
<div style="left:614px;top:1302px;width:1px;height:13px;background:#6a6a6a;"></div>
<div style="left:680px;top:1302px;width:1px;height:13px;background:#6a6a6a;"></div>
<div style="left:762px;top:1302px;width:1px;height:13px;background:#6a6a6a;"></div>
<span style="left:260px;top:1303.5px;line-height:16px;height:16px;font-size:9px;color:#e02020;font-weight:bold;transform:scaleX(1.098);transform-origin:0 50%;">99</span>
<span style="left:347px;top:1303.5px;line-height:16px;height:16px;font-size:9px;color:#e02020;font-weight:bold;">7</span>
<span style="left:598px;top:1303.5px;line-height:16px;height:16px;font-size:9px;color:#e02020;font-weight:bold;">4</span>
<svg style="left:0px;top:0px;" width="1514" height="1385" viewBox="0 0 1514 1385"><path d="M1332 1307.0 H1340.5 L1341.5 1315.0 H1331 Z" fill="#f7c600" stroke="#d8a000" stroke-width="0.9"/><path d="M1334 1308.0 V1305.5 Q1334 1303.5 1336.2 1303.5 Q1338.5 1303.5 1338.5 1305.5 V1308.0" stroke="#c89600" fill="none" stroke-width="1"/><circle cx="1395.5" cy="1309.5" r="1.1" fill="#2272b4"/><path d="M1393 1307.2 Q1391.7 1309.5 1393 1311.8 M1398 1307.2 Q1399.3 1309.5 1398 1311.8 M1391 1305.7 Q1388.5 1309.5 1391 1313.3 M1400 1305.7 Q1402.5 1309.5 1400 1313.3" stroke="#2272b4" fill="none" stroke-width="1"/><path d="M1465.0 1310.5 Q1462.5 1310.5 1462.5 1308.5 Q1462.5 1306.5 1465.0 1306.5 Q1465.8 1303.5 1468.5 1303.7 Q1471.2 1303.8 1471.8 1306.5 Q1474.0 1306.7 1474.0 1308.5 Q1474.0 1310.5 1471.5 1310.5 Z" stroke="#2272b4" fill="#cfe4f5" stroke-width="1.1"/><path d="M1468.3 1310.5 V1313.5 M1463.5 1314.0 H1473.0" stroke="#2272b4" stroke-width="1.1"/></svg>
<span style="left:1348px;top:1301.5px;line-height:16px;height:16px;font-size:13px;transform:scaleX(0.961);transform-origin:0 50%;">市場</span>
<span style="left:1406px;top:1301.5px;line-height:16px;height:16px;font-size:13px;transform:scaleX(0.807);transform-origin:0 50%;">シグナル</span>
<span style="left:1480px;top:1301.5px;line-height:16px;height:16px;font-size:12.5px;transform:scaleX(0.8);transform-origin:0 50%;">VPS</span>
<div style="left:0px;top:1322px;width:1514px;height:1px;background:#a8a8a8;"></div>
<div style="left:0px;top:1323px;width:1514px;height:1px;background:#fafafa;"></div>
<svg style="left:5px;top:1330px;" width="6" height="6" viewBox="0 0 6 6"><path d="M0.6 0.6 L5.4 5.4 M5.4 0.6 L0.6 5.4" stroke="#000" stroke-width="1.5"/></svg>
<div style="left:2px;top:1342px;width:12px;height:16px;background:#c4d2e4;"></div>
<span style="left:-12px;top:1343px;width:40px;height:14px;line-height:14px;font-size:11.5px;text-align:center;transform:rotate(-90deg) scaleY(0.9);transform-origin:50% 50%;overflow:hidden">スト</span>
<div style="left:15px;top:1328px;width:1496px;height:1px;background:#a8a8a8;"></div>
<div style="left:15px;top:1328px;width:1px;height:31px;background:#a8a8a8;"></div>
<div style="left:16px;top:1329px;width:1492px;height:6px;background:#fff;"></div>
<div style="left:16px;top:1335px;width:1492px;height:1px;background:#000;"></div>
<div style="left:19px;top:1335px;width:46px;height:20px;background:#fff;border:1px solid #000;border-top:none;box-shadow:1px 1px 0 #8c8c8c;"></div>
<span style="left:29px;top:1337.0px;line-height:16px;height:16px;font-size:13px;transform:scaleX(0.961);transform-origin:0 50%;">概要</span>
<span style="left:75px;top:1337.0px;line-height:16px;height:16px;font-size:13px;color:#8a8a8a;transform:scaleX(0.759);transform-origin:0 50%;">エージェント</span>
<div style="left:143px;top:1339px;width:1px;height:13px;background:#6a6a6a;"></div>
<span style="left:153px;top:1337.0px;line-height:16px;height:16px;font-size:13px;color:#8a8a8a;transform:scaleX(0.865);transform-origin:0 50%;">操作ログ</span>
<svg style="left:0px;top:0px;" width="1514" height="1385" viewBox="0 0 1514 1385"><path d="M1332 1344.5 H1340.5 L1341.5 1352.5 H1331 Z" fill="#f7c600" stroke="#d8a000" stroke-width="0.9"/><path d="M1334 1345.5 V1343 Q1334 1341 1336.2 1341 Q1338.5 1341 1338.5 1343 V1345.5" stroke="#c89600" fill="none" stroke-width="1"/><circle cx="1395.5" cy="1347" r="1.1" fill="#2272b4"/><path d="M1393 1344.7 Q1391.7 1347 1393 1349.3 M1398 1344.7 Q1399.3 1347 1398 1349.3 M1391 1343.2 Q1388.5 1347 1391 1350.8 M1400 1343.2 Q1402.5 1347 1400 1350.8" stroke="#2272b4" fill="none" stroke-width="1"/><path d="M1465.0 1348 Q1462.5 1348 1462.5 1346 Q1462.5 1344 1465.0 1344 Q1465.8 1341 1468.5 1341.2 Q1471.2 1341.3 1471.8 1344 Q1474.0 1344.2 1474.0 1346 Q1474.0 1348 1471.5 1348 Z" stroke="#2272b4" fill="#cfe4f5" stroke-width="1.1"/><path d="M1468.3 1348 V1351 M1463.5 1351.5 H1473.0" stroke="#2272b4" stroke-width="1.1"/></svg>
<span style="left:1348px;top:1339.0px;line-height:16px;height:16px;font-size:13px;transform:scaleX(0.961);transform-origin:0 50%;">市場</span>
<span style="left:1406px;top:1339.0px;line-height:16px;height:16px;font-size:13px;transform:scaleX(0.807);transform-origin:0 50%;">シグナル</span>
<span style="left:1480px;top:1339.0px;line-height:16px;height:16px;font-size:12.5px;transform:scaleX(0.8);transform-origin:0 50%;">VPS</span>
<div style="left:0px;top:1360px;width:1514px;height:1px;background:#a8a8a8;"></div>
<div style="left:0px;top:1361px;width:1514px;height:1px;background:#fafafa;"></div>
<span style="left:3px;top:1365.0px;line-height:16px;height:16px;font-size:12.5px;transform:scaleX(0.833);transform-origin:0 50%;">F1を押してヘルプを開く</span>
<div style="left:820px;top:1364px;width:1px;height:19px;background:#b8b8b8;"></div>
<div style="left:948px;top:1364px;width:1px;height:19px;background:#b8b8b8;"></div>
<div style="left:1046px;top:1364px;width:1px;height:19px;background:#b8b8b8;"></div>
<div style="left:1117px;top:1364px;width:1px;height:19px;background:#b8b8b8;"></div>
<div style="left:1188px;top:1364px;width:1px;height:19px;background:#b8b8b8;"></div>
<div style="left:1256px;top:1364px;width:1px;height:19px;background:#b8b8b8;"></div>
<div style="left:1326px;top:1364px;width:1px;height:19px;background:#b8b8b8;"></div>
<div style="left:1393px;top:1364px;width:1px;height:19px;background:#b8b8b8;"></div>
<span style="left:826px;top:1365.5px;line-height:16px;height:16px;font-size:12.5px;transform:scaleX(0.959);transform-origin:0 50%;">Default</span>
<svg style="left:1398px;top:1367px;" width="14" height="12" viewBox="0 0 14 12"><rect x="1" y="8" width="2" height="3" fill="#18a018"/><rect x="4" y="6" width="2" height="5" fill="#18a018"/><rect x="7" y="3.5" width="2" height="7.5" fill="#d0d0d0"/><rect x="10" y="1" width="2" height="10" fill="#d0d0d0"/></svg>
<span style="left:1418px;top:1365.5px;line-height:16px;height:16px;font-size:12.5px;transform:scaleX(0.891);transform-origin:0 50%;">404.47 ms</span>
<svg style="left:1498px;top:1370px;" width="12" height="12" viewBox="0 0 12 12"><path d="M10 2 h1.5 v1.5 h-1.5z M6.5 5.5 h1.5 v1.5 h-1.5z M10 5.5 h1.5 v1.5 h-1.5z M3 9 h1.5 v1.5 h-1.5z M6.5 9 h1.5 v1.5 h-1.5z M10 9 h1.5 v1.5 h-1.5z" fill="#b0b0b0"/></svg>
<div style="left:0;top:0;width:1514px;height:1385px;border:1px solid #8a8a8a;border-radius:8px;box-shadow:0 0 0 10px #8a8a8a;pointer-events:none;z-index:50"></div>
<div style="left:367px;top:177px;width:980px;height:964px;background:#f0f0f0;border-radius:8px;box-shadow:0 4px 16px 2px rgba(0,0,0,0.27),0 0 0 1px rgba(90,90,90,0.12);overflow:hidden;">
<div style="left:0;top:0;width:980px;height:30px;background:#fff"></div>
</div>
<svg style="left:0px;top:0px;" width="1514" height="1385" viewBox="0 0 1514 1385"><rect x="378.5" y="184.0" width="12" height="12.5" rx="2.5" fill="#cfe4f5" stroke="#2272b4" stroke-width="1.2"/><rect x="376.5" y="185.5" width="12.5" height="12.5" rx="2" fill="#f7c600" stroke="#dda400" stroke-width="1"/><text x="382.8" y="195.7" font-size="10" text-anchor="middle" fill="#b07c00">$</text><path d="M382.8 187.1 V196.7" stroke="#b07c00" stroke-width="0.9"/></svg>
<span style="left:396px;top:183.0px;line-height:16px;height:16px;font-size:13px;transform:scaleX(0.98);transform-origin:0 50%;">銘柄</span>
<svg style="left:1222px;top:183px;" width="112" height="16" viewBox="0 0 112 16"><path d="M6 8.5 H16" stroke="#222"/><rect x="51.5" y="3.5" width="9" height="9" stroke="#c8c8c8" fill="none"/><path d="M97 3 L107 13 M107 3 L97 13" stroke="#222" stroke-width="1.1"/></svg>
<div style="left:373px;top:234px;width:967px;height:870px;background:#f9f9f9;border:1px solid #e6e6e6;"></div>
<div style="left:472px;top:216px;width:95px;height:19px;background:#f1f1f1;border:1px solid #dedede;"></div>
<div style="left:566px;top:216px;width:95px;height:19px;background:#f1f1f1;border:1px solid #dedede;"></div>
<div style="left:373px;top:214px;width:100px;height:21px;background:#f9f9f9;border:1px solid #e6e6e6;border-bottom:none;"></div>
<span style="left:273px;width:300px;text-align:center;top:216.5px;line-height:16px;height:16px;font-size:12.5px;transform:scaleX(0.959);transform-origin:50% 50%;">仕様</span>
<span style="left:368px;width:300px;text-align:center;top:218.0px;line-height:16px;height:16px;font-size:12.5px;transform:scaleX(0.748);transform-origin:50% 50%;">チャートバー</span>
<span style="left:464px;width:300px;text-align:center;top:218.0px;line-height:16px;height:16px;font-size:12.5px;transform:scaleX(0.65);transform-origin:50% 50%;">ティック</span>
<div style="left:383px;top:244px;width:204px;height:848px;background:#fff;border:1px solid #7a8294;"></div>
<svg style="left:0px;top:0px;" width="1514" height="1385" viewBox="0 0 1514 1385"><path d="M390.5 251 Q390.5 249.5 392 249.5 H396.5 L398 251.5 H404 Q405.5 251.5 405.5 253 V261 Q405.5 262.5 404 262.5 H392 Q390.5 262.5 390.5 261 Z" fill="#f7c600" stroke="#dda400"/><path d="M390.5 253.5 H405.5" stroke="#dda400" stroke-width="0.8"/><path d="M398.5 265 V416.5" stroke="#9a9a9a" stroke-dasharray="1 1"/><path d="M399 276.5 H409" stroke="#9a9a9a" stroke-dasharray="1 1"/><rect x="413.5" y="269.0" width="12" height="12.5" rx="2.5" fill="#cfe4f5" stroke="#2272b4" stroke-width="1.2"/><rect x="411.5" y="270.5" width="12.5" height="12.5" rx="2" fill="#f7c600" stroke="#dda400" stroke-width="1"/><text x="417.8" y="280.7" font-size="10" text-anchor="middle" fill="#b07c00">$</text><path d="M417.8 272.1 V281.7" stroke="#b07c00" stroke-width="0.9"/><path d="M399 296.5 H409" stroke="#9a9a9a" stroke-dasharray="1 1"/><rect x="413.5" y="289.0" width="12" height="12.5" rx="2.5" fill="#cfe4f5" stroke="#2272b4" stroke-width="1.2"/><rect x="411.5" y="290.5" width="12.5" height="12.5" rx="2" fill="#f7c600" stroke="#dda400" stroke-width="1"/><text x="417.8" y="300.7" font-size="10" text-anchor="middle" fill="#b07c00">$</text><path d="M417.8 292.1 V301.7" stroke="#b07c00" stroke-width="0.9"/><path d="M399 316.5 H409" stroke="#9a9a9a" stroke-dasharray="1 1"/><rect x="413.5" y="309.0" width="12" height="12.5" rx="2.5" fill="#cfe4f5" stroke="#2272b4" stroke-width="1.2"/><rect x="411.5" y="310.5" width="12.5" height="12.5" rx="2" fill="#f7c600" stroke="#dda400" stroke-width="1"/><text x="417.8" y="320.7" font-size="10" text-anchor="middle" fill="#b07c00">$</text><path d="M417.8 312.1 V321.7" stroke="#b07c00" stroke-width="0.9"/><path d="M399 336.5 H409" stroke="#9a9a9a" stroke-dasharray="1 1"/><rect x="413.5" y="329.0" width="12" height="12.5" rx="2.5" fill="#cfe4f5" stroke="#2272b4" stroke-width="1.2"/><rect x="411.5" y="330.5" width="12.5" height="12.5" rx="2" fill="#f7c600" stroke="#dda400" stroke-width="1"/><text x="417.8" y="340.7" font-size="10" text-anchor="middle" fill="#b07c00">$</text><path d="M417.8 332.1 V341.7" stroke="#b07c00" stroke-width="0.9"/><path d="M399 356.5 H409" stroke="#9a9a9a" stroke-dasharray="1 1"/><rect x="413.5" y="349.0" width="12" height="12.5" rx="2.5" fill="#cfe4f5" stroke="#2272b4" stroke-width="1.2"/><rect x="411.5" y="350.5" width="12.5" height="12.5" rx="2" fill="#f7c600" stroke="#dda400" stroke-width="1"/><text x="417.8" y="360.7" font-size="10" text-anchor="middle" fill="#b07c00">$</text><path d="M417.8 352.1 V361.7" stroke="#b07c00" stroke-width="0.9"/><path d="M399 376.5 H409" stroke="#9a9a9a" stroke-dasharray="1 1"/><rect x="413.5" y="369.0" width="12" height="12.5" rx="2.5" fill="#cfe4f5" stroke="#2272b4" stroke-width="1.2"/><rect x="411.5" y="370.5" width="12.5" height="12.5" rx="2" fill="#f7c600" stroke="#dda400" stroke-width="1"/><text x="417.8" y="380.7" font-size="10" text-anchor="middle" fill="#b07c00">$</text><path d="M417.8 372.1 V381.7" stroke="#b07c00" stroke-width="0.9"/><path d="M399 396.5 H409" stroke="#9a9a9a" stroke-dasharray="1 1"/><rect x="413.5" y="389.0" width="12" height="12.5" rx="2.5" fill="#cfe4f5" stroke="#2272b4" stroke-width="1.2"/><rect x="411.5" y="390.5" width="12.5" height="12.5" rx="2" fill="#f7c600" stroke="#dda400" stroke-width="1"/><text x="417.8" y="400.7" font-size="10" text-anchor="middle" fill="#b07c00">$</text><path d="M417.8 392.1 V401.7" stroke="#b07c00" stroke-width="0.9"/><path d="M399 416.5 H409" stroke="#9a9a9a" stroke-dasharray="1 1"/><rect x="413.5" y="409.0" width="12" height="12.5" rx="2.5" fill="#cfe4f5" stroke="#2272b4" stroke-width="1.2"/><rect x="411.5" y="410.5" width="12.5" height="12.5" rx="2" fill="#f7c600" stroke="#dda400" stroke-width="1"/><text x="417.8" y="420.7" font-size="10" text-anchor="middle" fill="#b07c00">$</text><path d="M417.8 412.1 V421.7" stroke="#b07c00" stroke-width="0.9"/><path d="M424.5 408.0 V412.0 M422.5 410.0 H426.5" stroke="#2272b4" stroke-width="1.2"/></svg>
<div style="left:430px;top:347px;width:67px;height:20px;background:#ededed;"></div>
<span style="left:410px;top:248.5px;line-height:16px;height:16px;transform:scaleX(0.864);transform-origin:0 50%;">Exness</span>
<span style="left:431px;top:268.0px;line-height:16px;height:16px;transform:scaleX(0.924);transform-origin:0 50%;">Forex_Indicator</span>
<span style="left:431px;top:288.0px;line-height:16px;height:16px;transform:scaleX(0.904);transform-origin:0 50%;">CryptoCross_grp</span>
<span style="left:431px;top:308.0px;line-height:16px;height:16px;transform:scaleX(0.921);transform-origin:0 50%;">Crypto_group</span>
<span style="left:431px;top:328.0px;line-height:16px;height:16px;transform:scaleX(0.885);transform-origin:0 50%;">Energies_group</span>
<span style="left:431px;top:348.0px;line-height:16px;height:16px;transform:scaleX(0.911);transform-origin:0 50%;">Forex_group</span>
<span style="left:431px;top:368.0px;line-height:16px;height:16px;transform:scaleX(0.902);transform-origin:0 50%;">Indices_group</span>
<span style="left:431px;top:388.0px;line-height:16px;height:16px;transform:scaleX(0.886);transform-origin:0 50%;">Stocks_group</span>
<span style="left:431px;top:408.0px;line-height:16px;height:16px;transform:scaleX(0.871);transform-origin:0 50%;">Custom</span>
<div style="left:595px;top:244px;width:526px;height:21px;background:#fff;border:1px solid #8a8a8a;border-radius:2px;"></div>
<svg style="left:598px;top:246px;" width="18" height="18" viewBox="0 0 18 18"><circle cx="7.5" cy="7.5" r="4.8" stroke="#333" fill="none" stroke-width="1.3"/><path d="M11 11 L15 15.5" stroke="#333" stroke-width="1.4"/></svg>
<svg style="left:1105px;top:249px;" width="12" height="10" viewBox="0 0 12 10"><path d="M1.5 3 L6 7.5 L10.5 3" stroke="#444" fill="none" stroke-width="1.1"/></svg>
<div style="left:1128px;top:247px;width:13px;height:13px;background:#fff;border:1px solid #555;border-radius:3px;"></div>
<span style="left:1143px;top:245.5px;line-height:16px;height:16px;font-size:12.5px;transform:scaleX(0.924);transform-origin:0 50%;">期限切れ契約を表示</span>
<div style="left:595px;top:272px;width:736px;height:125px;background:#fff;border:1px solid #7a8294;"></div>
<div style="left:1312px;top:274px;width:18px;height:122px;background:#f0f0f0;"></div>
<div style="left:1320px;top:352px;width:2px;height:17px;background:#8a8a8a;"></div>
<span style="left:603px;top:278.0px;line-height:16px;height:16px;font-size:12.5px;transform:scaleX(0.959);transform-origin:0 50%;">銘柄</span>
<span style="left:817px;top:278.0px;line-height:16px;height:16px;font-size:12.5px;transform:scaleX(0.959);transform-origin:0 50%;">詳細</span>
<span style="right:208px;top:278.0px;line-height:16px;height:16px;font-size:12.5px;transform:scaleX(0.959);transform-origin:100% 50%;">失効</span>
<div style="left:810px;top:275px;width:1px;height:23px;background:#e2e2e2;"></div>
<div style="left:1167px;top:275px;width:1px;height:23px;background:#e2e2e2;"></div>
<div style="left:596px;top:298px;width:716px;height:19px;background:#f0fff0;"></div>
<div style="left:596px;top:317px;width:716px;height:1px;background:#d4d4d4;"></div>
<span style="left:617.5px;top:300.0px;line-height:16px;height:16px;color:#000;transform:scaleX(0.806);transform-origin:0 50%;">USDILSm</span>
<span style="left:813px;top:300.0px;line-height:16px;height:16px;color:#000;transform:scaleX(0.874);transform-origin:0 50%;">US Dollar vs New Israeli Shekel</span>
<div style="left:596px;top:318px;width:716px;height:19px;background:#0078d7;"></div>
<div style="left:596px;top:337px;width:716px;height:1px;background:#d4d4d4;"></div>
<span style="left:617.5px;top:320.0px;line-height:16px;height:16px;color:#fff;transform:scaleX(0.776);transform-origin:0 50%;">USDJPYm</span>
<span style="left:813px;top:320.0px;line-height:16px;height:16px;color:#fff;transform:scaleX(0.88);transform-origin:0 50%;">US Dollar vs Japanese Yen</span>
<div style="left:596px;top:338px;width:716px;height:19px;background:#f0fff0;"></div>
<div style="left:596px;top:357px;width:716px;height:1px;background:#d4d4d4;"></div>
<span style="left:617.5px;top:340.0px;line-height:16px;height:16px;color:#000;transform:scaleX(0.774);transform-origin:0 50%;">USDMXNm</span>
<span style="left:813px;top:340.0px;line-height:16px;height:16px;color:#000;transform:scaleX(0.867);transform-origin:0 50%;">US Dollar vs Mexican Peso</span>
<div style="left:596px;top:358px;width:716px;height:19px;background:#f0fff0;"></div>
<div style="left:596px;top:377px;width:716px;height:1px;background:#d4d4d4;"></div>
<span style="left:617.5px;top:360.0px;line-height:16px;height:16px;color:#000;transform:scaleX(0.791);transform-origin:0 50%;">USDNOKm</span>
<span style="left:813px;top:360.0px;line-height:16px;height:16px;color:#000;transform:scaleX(0.879);transform-origin:0 50%;">US Dollar vs Norwegian Krona</span>
<div style="left:596px;top:378px;width:716px;height:18px;background:#f0fff0;"></div>
<span style="left:617.5px;top:380.0px;line-height:16px;height:16px;color:#000;transform:scaleX(0.767);transform-origin:0 50%;">USDPLNm</span>
<span style="left:813px;top:380.0px;line-height:16px;height:16px;color:#000;transform:scaleX(0.885);transform-origin:0 50%;">US Dollar vs Zloty</span>
<div style="left:810px;top:298px;width:1px;height:98px;background:#c4c4c4;"></div>
<div style="left:1167px;top:298px;width:1px;height:98px;background:#c4c4c4;"></div>
<svg style="left:0px;top:0px;" width="1514" height="1385" viewBox="0 0 1514 1385"><rect x="600.0" y="301" width="12.5" height="12.5" rx="2" fill="#f7c600" stroke="#dda400" stroke-width="1"/><text x="606.3" y="311.2" font-size="10" text-anchor="middle" fill="#b07c00">$</text><path d="M606.3 302.6 V312.2" stroke="#b07c00" stroke-width="0.9"/><rect x="600.0" y="321" width="12.5" height="12.5" rx="2" fill="#f7c600" stroke="#dda400" stroke-width="1"/><text x="606.3" y="331.2" font-size="10" text-anchor="middle" fill="#b07c00">$</text><path d="M606.3 322.6 V332.2" stroke="#b07c00" stroke-width="0.9"/><rect x="600.0" y="341" width="12.5" height="12.5" rx="2" fill="#f7c600" stroke="#dda400" stroke-width="1"/><text x="606.3" y="351.2" font-size="10" text-anchor="middle" fill="#b07c00">$</text><path d="M606.3 342.6 V352.2" stroke="#b07c00" stroke-width="0.9"/><rect x="600.0" y="361" width="12.5" height="12.5" rx="2" fill="#f7c600" stroke="#dda400" stroke-width="1"/><text x="606.3" y="371.2" font-size="10" text-anchor="middle" fill="#b07c00">$</text><path d="M606.3 362.6 V372.2" stroke="#b07c00" stroke-width="0.9"/><rect x="600.0" y="381" width="12.5" height="12.5" rx="2" fill="#f7c600" stroke="#dda400" stroke-width="1"/><text x="606.3" y="391.2" font-size="10" text-anchor="middle" fill="#b07c00">$</text><path d="M606.3 382.6 V392.2" stroke="#b07c00" stroke-width="0.9"/></svg>
<div style="left:595px;top:403px;width:736px;height:689px;background:#fff;border:1px solid #7a8294;overflow:hidden;"></div>
<div style="left:1312px;top:404px;width:18px;height:687px;background:#f0f0f0;"></div>
<div style="left:1320px;top:422px;width:2px;height:491px;background:#8a8a8a;"></div>
<span style="left:600px;top:406.0px;line-height:16px;height:16px;font-size:11.5px;font-weight:bold;">USDJPYm, USD/JPY, US Dollar vs Japanese Yen</span>
<div style="left:596px;top:404px;width:716px;height:687px;overflow:hidden">
<div style="left:0;top:20px;width:716px;height:19px;background:#ececec"></div>
<div style="left:0;top:19px;width:716px;height:1px;background:#cdcdcd"></div>
<div style="left:0;top:39px;width:716px;height:1px;background:#cdcdcd"></div>
<div style="left:0;top:60px;width:716px;height:19px;background:#ececec"></div>
<div style="left:0;top:59px;width:716px;height:1px;background:#cdcdcd"></div>
<div style="left:0;top:79px;width:716px;height:1px;background:#cdcdcd"></div>
<div style="left:0;top:100px;width:716px;height:19px;background:#ececec"></div>
<div style="left:0;top:99px;width:716px;height:1px;background:#cdcdcd"></div>
<div style="left:0;top:119px;width:716px;height:1px;background:#cdcdcd"></div>
<div style="left:0;top:140px;width:716px;height:19px;background:#ececec"></div>
<div style="left:0;top:139px;width:716px;height:1px;background:#cdcdcd"></div>
<div style="left:0;top:159px;width:716px;height:1px;background:#cdcdcd"></div>
<div style="left:0;top:180px;width:716px;height:19px;background:#ececec"></div>
<div style="left:0;top:179px;width:716px;height:1px;background:#cdcdcd"></div>
<div style="left:0;top:199px;width:716px;height:1px;background:#cdcdcd"></div>
<div style="left:0;top:220px;width:716px;height:19px;background:#ececec"></div>
<div style="left:0;top:219px;width:716px;height:1px;background:#cdcdcd"></div>
<div style="left:0;top:239px;width:716px;height:1px;background:#cdcdcd"></div>
<div style="left:0;top:260px;width:716px;height:19px;background:#ececec"></div>
<div style="left:0;top:259px;width:716px;height:1px;background:#cdcdcd"></div>
<div style="left:0;top:279px;width:716px;height:1px;background:#cdcdcd"></div>
<div style="left:0;top:300px;width:716px;height:19px;background:#ececec"></div>
<div style="left:0;top:299px;width:716px;height:1px;background:#cdcdcd"></div>
<div style="left:0;top:319px;width:716px;height:1px;background:#cdcdcd"></div>
<div style="left:0;top:340px;width:716px;height:19px;background:#ececec"></div>
<div style="left:0;top:339px;width:716px;height:1px;background:#cdcdcd"></div>
<div style="left:0;top:359px;width:716px;height:1px;background:#cdcdcd"></div>
<div style="left:0;top:380px;width:716px;height:19px;background:#ececec"></div>
<div style="left:0;top:379px;width:716px;height:1px;background:#cdcdcd"></div>
<div style="left:0;top:399px;width:716px;height:1px;background:#cdcdcd"></div>
<div style="left:0;top:420px;width:716px;height:19px;background:#ececec"></div>
<div style="left:0;top:419px;width:716px;height:1px;background:#cdcdcd"></div>
<div style="left:0;top:439px;width:716px;height:1px;background:#cdcdcd"></div>
<div style="left:0;top:460px;width:716px;height:19px;background:#ececec"></div>
<div style="left:0;top:459px;width:716px;height:1px;background:#cdcdcd"></div>
<div style="left:0;top:479px;width:716px;height:1px;background:#cdcdcd"></div>
<div style="left:0;top:500px;width:716px;height:19px;background:#ececec"></div>
<div style="left:0;top:499px;width:716px;height:1px;background:#cdcdcd"></div>
<div style="left:0;top:519px;width:716px;height:1px;background:#cdcdcd"></div>
<div style="left:0;top:540px;width:716px;height:19px;background:#ececec"></div>
<div style="left:0;top:539px;width:716px;height:1px;background:#cdcdcd"></div>
<div style="left:0;top:559px;width:716px;height:1px;background:#cdcdcd"></div>
<div style="left:0;top:580px;width:716px;height:19px;background:#ececec"></div>
<div style="left:0;top:579px;width:716px;height:1px;background:#cdcdcd"></div>
<div style="left:0;top:599px;width:716px;height:1px;background:#cdcdcd"></div>
<div style="left:0;top:620px;width:716px;height:19px;background:#ececec"></div>
<div style="left:0;top:619px;width:716px;height:1px;background:#cdcdcd"></div>
<div style="left:0;top:639px;width:716px;height:1px;background:#cdcdcd"></div>
<div style="left:0;top:660px;width:716px;height:19px;background:#ececec"></div>
<div style="left:0;top:659px;width:716px;height:1px;background:#cdcdcd"></div>
<div style="left:0;top:679px;width:716px;height:1px;background:#cdcdcd"></div>
<div style="left:286px;top:20px;width:1px;height:680px;background:#cdcdcd"></div>
<div style="left:500px;top:200px;width:1px;height:180px;background:#cdcdcd"></div>
</div>
<span style="left:600.5px;top:425.5px;line-height:16px;height:16px;font-size:12.5px;color:#c0902c;transform:scaleX(0.827);transform-origin:0 50%;">ab</span>
<span style="left:617.5px;top:426.0px;line-height:16px;height:16px;transform:scaleX(0.708);transform-origin:0 50%;">カテゴリ</span>
<span style="right:207px;top:426.0px;line-height:16px;height:16px;font-size:11.5px;transform:scaleX(0.985);transform-origin:100% 50%;">Majors</span>
<span style="left:600.5px;top:446.0px;line-height:16px;height:16px;font-size:11px;color:#2272b4;transform:scaleX(0.898);transform-origin:0 50%;-webkit-text-stroke:0.3px #2272b4;">01</span>
<span style="left:617.5px;top:446.0px;line-height:16px;height:16px;">小数桁</span>
<span style="right:207px;top:446.0px;line-height:16px;height:16px;font-size:11.5px;transform:scaleX(0.937);transform-origin:100% 50%;">3</span>
<span style="left:600.5px;top:464.5px;line-height:16px;height:16px;font-size:16.5px;color:#2272b4;transform:scaleX(0.835);transform-origin:0 50%;-webkit-text-stroke:0.35px #2272b4;">½</span>
<span style="left:617.5px;top:466.0px;line-height:16px;height:16px;transform:scaleX(0.905);transform-origin:0 50%;">契約サイズ</span>
<span style="right:207px;top:466.0px;line-height:16px;height:16px;font-size:11.5px;transform:scaleX(0.938);transform-origin:100% 50%;">100000</span>
<span style="left:600.5px;top:486.0px;line-height:16px;height:16px;font-size:11px;color:#2272b4;transform:scaleX(0.898);transform-origin:0 50%;-webkit-text-stroke:0.3px #2272b4;">01</span>
<span style="left:617.5px;top:486.0px;line-height:16px;height:16px;transform:scaleX(0.733);transform-origin:0 50%;">スプレッド</span>
<span style="right:207px;top:486.0px;line-height:16px;height:16px;font-size:11.5px;transform:scaleX(0.764);transform-origin:100% 50%;">フローティング</span>
<span style="left:600.5px;top:506.0px;line-height:16px;height:16px;font-size:11px;color:#2272b4;transform:scaleX(0.898);transform-origin:0 50%;-webkit-text-stroke:0.3px #2272b4;">01</span>
<span style="left:617.5px;top:506.0px;line-height:16px;height:16px;transform:scaleX(0.738);transform-origin:0 50%;">ストップレベル</span>
<span style="right:207px;top:506.0px;line-height:16px;height:16px;font-size:11.5px;transform:scaleX(0.937);transform-origin:100% 50%;">0</span>
<span style="left:600.5px;top:525.5px;line-height:16px;height:16px;font-size:12.5px;color:#c0902c;transform:scaleX(0.827);transform-origin:0 50%;">ab</span>
<span style="left:617.5px;top:526.0px;line-height:16px;height:16px;">証拠金通貨</span>
<span style="right:207px;top:526.0px;line-height:16px;height:16px;font-size:11.5px;transform:scaleX(0.865);transform-origin:100% 50%;">USD</span>
<span style="left:600.5px;top:545.5px;line-height:16px;height:16px;font-size:12.5px;color:#c0902c;transform:scaleX(0.827);transform-origin:0 50%;">ab</span>
<span style="left:617.5px;top:546.0px;line-height:16px;height:16px;">損益通貨</span>
<span style="right:207px;top:546.0px;line-height:16px;height:16px;font-size:11.5px;transform:scaleX(0.806);transform-origin:100% 50%;">JPY</span>
<span style="left:617.5px;top:566.0px;line-height:16px;height:16px;">計算</span>
<span style="right:207px;top:566.0px;line-height:16px;height:16px;font-size:11.5px;transform:scaleX(0.816);transform-origin:100% 50%;">FX</span>
<span style="left:617.5px;top:586.0px;line-height:16px;height:16px;transform:scaleX(0.763);transform-origin:0 50%;">チャートモード</span>
<span style="right:207px;top:586.0px;line-height:16px;height:16px;font-size:11.5px;transform:scaleX(0.87);transform-origin:100% 50%;">ビッド価格で</span>
<span style="left:600px;top:606.0px;line-height:16px;height:16px;font-size:11.5px;font-weight:bold;transform:scaleX(1.087);transform-origin:0 50%;">証拠金率</span>
<span style="right:422px;top:606.0px;line-height:16px;height:16px;font-size:11.5px;font-weight:bold;transform:scaleX(1.166);transform-origin:100% 50%;">初期(証拠金)</span>
<span style="right:207px;top:606.0px;line-height:16px;height:16px;font-size:11.5px;font-weight:bold;transform:scaleX(1.166);transform-origin:100% 50%;">追加(証拠金)</span>
<span style="left:600.5px;top:624.5px;line-height:16px;height:16px;font-size:16.5px;color:#2272b4;transform:scaleX(0.835);transform-origin:0 50%;-webkit-text-stroke:0.35px #2272b4;">½</span>
<span style="left:617.5px;top:626.0px;line-height:16px;height:16px;transform:scaleX(0.952);transform-origin:0 50%;">成行買い(Buy)</span>
<span style="right:422px;top:626.0px;line-height:16px;height:16px;font-size:11.5px;transform:scaleX(0.938);transform-origin:100% 50%;">1.0000000</span>
<span style="right:207px;top:626.0px;line-height:16px;height:16px;font-size:11.5px;transform:scaleX(0.938);transform-origin:100% 50%;">0.0000000</span>
<span style="left:600.5px;top:644.5px;line-height:16px;height:16px;font-size:16.5px;color:#2272b4;transform:scaleX(0.835);transform-origin:0 50%;-webkit-text-stroke:0.35px #2272b4;">½</span>
<span style="left:617.5px;top:646.0px;line-height:16px;height:16px;transform:scaleX(0.895);transform-origin:0 50%;">成行売り(Sell)</span>
<span style="right:422px;top:646.0px;line-height:16px;height:16px;font-size:11.5px;transform:scaleX(0.938);transform-origin:100% 50%;">1.0000000</span>
<span style="right:207px;top:646.0px;line-height:16px;height:16px;font-size:11.5px;transform:scaleX(0.938);transform-origin:100% 50%;">0.0000000</span>
<span style="left:600.5px;top:664.5px;line-height:16px;height:16px;font-size:16.5px;color:#2272b4;transform:scaleX(0.835);transform-origin:0 50%;-webkit-text-stroke:0.35px #2272b4;">½</span>
<span style="left:617.5px;top:666.0px;line-height:16px;height:16px;transform:scaleX(0.86);transform-origin:0 50%;">Buy limit</span>
<span style="right:422px;top:666.0px;line-height:16px;height:16px;font-size:11.5px;transform:scaleX(0.938);transform-origin:100% 50%;">0.0000000</span>
<span style="right:207px;top:666.0px;line-height:16px;height:16px;font-size:11.5px;transform:scaleX(0.938);transform-origin:100% 50%;">0.0000000</span>
<span style="left:600.5px;top:684.5px;line-height:16px;height:16px;font-size:16.5px;color:#2272b4;transform:scaleX(0.835);transform-origin:0 50%;-webkit-text-stroke:0.35px #2272b4;">½</span>
<span style="left:617.5px;top:686.0px;line-height:16px;height:16px;transform:scaleX(0.828);transform-origin:0 50%;">Sell limit</span>
<span style="right:422px;top:686.0px;line-height:16px;height:16px;font-size:11.5px;transform:scaleX(0.938);transform-origin:100% 50%;">0.0000000</span>
<span style="right:207px;top:686.0px;line-height:16px;height:16px;font-size:11.5px;transform:scaleX(0.938);transform-origin:100% 50%;">0.0000000</span>
<span style="left:600.5px;top:704.5px;line-height:16px;height:16px;font-size:16.5px;color:#2272b4;transform:scaleX(0.835);transform-origin:0 50%;-webkit-text-stroke:0.35px #2272b4;">½</span>
<span style="left:617.5px;top:706.0px;line-height:16px;height:16px;transform:scaleX(0.899);transform-origin:0 50%;">Buy stop</span>
<span style="right:422px;top:706.0px;line-height:16px;height:16px;font-size:11.5px;transform:scaleX(0.938);transform-origin:100% 50%;">0.0000000</span>
<span style="right:207px;top:706.0px;line-height:16px;height:16px;font-size:11.5px;transform:scaleX(0.938);transform-origin:100% 50%;">0.0000000</span>
<span style="left:600.5px;top:724.5px;line-height:16px;height:16px;font-size:16.5px;color:#2272b4;transform:scaleX(0.835);transform-origin:0 50%;-webkit-text-stroke:0.35px #2272b4;">½</span>
<span style="left:617.5px;top:726.0px;line-height:16px;height:16px;transform:scaleX(0.869);transform-origin:0 50%;">Sell stop</span>
<span style="right:422px;top:726.0px;line-height:16px;height:16px;font-size:11.5px;transform:scaleX(0.938);transform-origin:100% 50%;">0.0000000</span>
<span style="right:207px;top:726.0px;line-height:16px;height:16px;font-size:11.5px;transform:scaleX(0.938);transform-origin:100% 50%;">0.0000000</span>
<span style="left:600.5px;top:744.5px;line-height:16px;height:16px;font-size:16.5px;color:#2272b4;transform:scaleX(0.835);transform-origin:0 50%;-webkit-text-stroke:0.35px #2272b4;">½</span>
<span style="left:617.5px;top:746.0px;line-height:16px;height:16px;transform:scaleX(0.883);transform-origin:0 50%;">Buy stop limit</span>
<span style="right:422px;top:746.0px;line-height:16px;height:16px;font-size:11.5px;transform:scaleX(0.938);transform-origin:100% 50%;">0.0000000</span>
<span style="right:207px;top:746.0px;line-height:16px;height:16px;font-size:11.5px;transform:scaleX(0.938);transform-origin:100% 50%;">0.0000000</span>
<span style="left:600.5px;top:764.5px;line-height:16px;height:16px;font-size:16.5px;color:#2272b4;transform:scaleX(0.835);transform-origin:0 50%;-webkit-text-stroke:0.35px #2272b4;">½</span>
<span style="left:617.5px;top:766.0px;line-height:16px;height:16px;transform:scaleX(0.863);transform-origin:0 50%;">Sell stop limit</span>
<span style="right:422px;top:766.0px;line-height:16px;height:16px;font-size:11.5px;transform:scaleX(0.938);transform-origin:100% 50%;">0.0000000</span>
<span style="right:207px;top:766.0px;line-height:16px;height:16px;font-size:11.5px;transform:scaleX(0.938);transform-origin:100% 50%;">0.0000000</span>
<span style="left:617.5px;top:786.0px;line-height:16px;height:16px;">取引</span>
<span style="right:207px;top:786.0px;line-height:16px;height:16px;font-size:11.5px;transform:scaleX(0.971);transform-origin:100% 50%;">売買制限なし</span>
<span style="left:617.5px;top:806.0px;line-height:16px;height:16px;">執行</span>
<span style="right:207px;top:806.0px;line-height:16px;height:16px;font-size:11.5px;transform:scaleX(0.765);transform-origin:100% 50%;">マーケット</span>
<span style="left:617.5px;top:826.0px;line-height:16px;height:16px;transform:scaleX(0.789);transform-origin:0 50%;">GTC モード</span>
<span style="right:207px;top:826.0px;line-height:16px;height:16px;font-size:11.5px;transform:scaleX(0.87);transform-origin:100% 50%;">キャンセルするまで有効</span>
<span style="left:617.5px;top:846.0px;line-height:16px;height:16px;">約定</span>
<span style="right:207px;top:846.0px;line-height:16px;height:16px;font-size:11.5px;transform:scaleX(0.842);transform-origin:100% 50%;">すべて</span>
<span style="left:617.5px;top:866.0px;line-height:16px;height:16px;">失効</span>
<span style="right:207px;top:866.0px;line-height:16px;height:16px;font-size:11.5px;transform:scaleX(0.842);transform-origin:100% 50%;">すべて</span>
<span style="left:617.5px;top:886.0px;line-height:16px;height:16px;">注文</span>
<span style="right:207px;top:886.0px;line-height:16px;height:16px;font-size:11.5px;transform:scaleX(0.842);transform-origin:100% 50%;">すべて</span>
<span style="left:600.5px;top:904.5px;line-height:16px;height:16px;font-size:16.5px;color:#2272b4;transform:scaleX(0.835);transform-origin:0 50%;-webkit-text-stroke:0.35px #2272b4;">½</span>
<span style="left:617.5px;top:906.0px;line-height:16px;height:16px;">最小取引数量</span>
<span style="right:207px;top:906.0px;line-height:16px;height:16px;font-size:11.5px;transform:scaleX(0.983);transform-origin:100% 50%;">0.01</span>
<span style="left:600.5px;top:924.5px;line-height:16px;height:16px;font-size:16.5px;color:#2272b4;transform:scaleX(0.835);transform-origin:0 50%;-webkit-text-stroke:0.35px #2272b4;">½</span>
<span style="left:617.5px;top:926.0px;line-height:16px;height:16px;">最大取引数量</span>
<span style="right:207px;top:926.0px;line-height:16px;height:16px;font-size:11.5px;transform:scaleX(0.938);transform-origin:100% 50%;">200</span>
<span style="left:600.5px;top:944.5px;line-height:16px;height:16px;font-size:16.5px;color:#2272b4;transform:scaleX(0.835);transform-origin:0 50%;-webkit-text-stroke:0.35px #2272b4;">½</span>
<span style="left:617.5px;top:946.0px;line-height:16px;height:16px;transform:scaleX(0.805);transform-origin:0 50%;">数量ステップ</span>
<span style="right:207px;top:946.0px;line-height:16px;height:16px;font-size:11.5px;transform:scaleX(0.983);transform-origin:100% 50%;">0.01</span>
<span style="left:617.5px;top:966.0px;line-height:16px;height:16px;transform:scaleX(0.702);transform-origin:0 50%;">スワップタイプ</span>
<span style="right:207px;top:966.0px;line-height:16px;height:16px;font-size:11.5px;transform:scaleX(0.804);transform-origin:100% 50%;">ポイント</span>
<span style="left:600.5px;top:984.5px;line-height:16px;height:16px;font-size:16.5px;color:#2272b4;transform:scaleX(0.835);transform-origin:0 50%;-webkit-text-stroke:0.35px #2272b4;">½</span>
<span style="left:617.5px;top:986.0px;line-height:16px;height:16px;transform:scaleX(0.75);transform-origin:0 50%;">買スワップ</span>
<span style="right:207px;top:986.0px;line-height:16px;height:16px;font-size:11.5px;transform:scaleX(0.966);transform-origin:100% 50%;">0.6105</span>
<span style="left:600.5px;top:1004.5px;line-height:16px;height:16px;font-size:16.5px;color:#2272b4;transform:scaleX(0.835);transform-origin:0 50%;-webkit-text-stroke:0.35px #2272b4;">½</span>
<span style="left:617.5px;top:1006.0px;line-height:16px;height:16px;transform:scaleX(0.75);transform-origin:0 50%;">売スワップ</span>
<span style="right:207px;top:1006.0px;line-height:16px;height:16px;font-size:11.5px;transform:scaleX(0.974);transform-origin:100% 50%;">-4.2754</span>
<span style="left:600px;top:1026.0px;line-height:16px;height:16px;font-size:11.5px;font-weight:bold;transform:scaleX(1.037);transform-origin:0 50%;">Swap rates</span>
<span style="left:617.5px;top:1046.0px;line-height:16px;height:16px;">月曜日</span>
<span style="right:207px;top:1046.0px;line-height:16px;height:16px;font-size:11.5px;transform:scaleX(0.937);transform-origin:100% 50%;">1</span>
<span style="left:617.5px;top:1066.0px;line-height:16px;height:16px;">火曜日</span>
<span style="right:207px;top:1066.0px;line-height:16px;height:16px;font-size:11.5px;transform:scaleX(0.937);transform-origin:100% 50%;">1</span>
<span style="left:617.5px;top:1086.0px;line-height:16px;height:16px;clip-path:inset(0 0 11px 0);">水曜日</span>
<svg style="left:0px;top:0px;" width="1514" height="1385" viewBox="0 0 1514 1385"><path d="M603 568.5 H610 M603 576.5 H610 M603 578.5 H610" stroke="#e03a3a" stroke-width="1"/><path d="M603 570.5 H610" stroke="#2272b4" stroke-width="1"/><rect x="601.5" y="572.5" width="10" height="3" rx="1.5" fill="#fff" stroke="#2272b4" stroke-width="1"/><path d="M603 588.5 H610 M603 596.5 H610 M603 598.5 H610" stroke="#e03a3a" stroke-width="1"/><path d="M603 590.5 H610" stroke="#2272b4" stroke-width="1"/><rect x="601.5" y="592.5" width="10" height="3" rx="1.5" fill="#fff" stroke="#2272b4" stroke-width="1"/><path d="M603 788.5 H610 M603 796.5 H610 M603 798.5 H610" stroke="#e03a3a" stroke-width="1"/><path d="M603 790.5 H610" stroke="#2272b4" stroke-width="1"/><rect x="601.5" y="792.5" width="10" height="3" rx="1.5" fill="#fff" stroke="#2272b4" stroke-width="1"/><path d="M603 808.5 H610 M603 816.5 H610 M603 818.5 H610" stroke="#e03a3a" stroke-width="1"/><path d="M603 810.5 H610" stroke="#2272b4" stroke-width="1"/><rect x="601.5" y="812.5" width="10" height="3" rx="1.5" fill="#fff" stroke="#2272b4" stroke-width="1"/><path d="M603 828.5 H610 M603 836.5 H610 M603 838.5 H610" stroke="#e03a3a" stroke-width="1"/><path d="M603 830.5 H610" stroke="#2272b4" stroke-width="1"/><rect x="601.5" y="832.5" width="10" height="3" rx="1.5" fill="#fff" stroke="#2272b4" stroke-width="1"/><path d="M603 848.5 H610 M603 856.5 H610 M603 858.5 H610" stroke="#e03a3a" stroke-width="1"/><path d="M603 850.5 H610" stroke="#2272b4" stroke-width="1"/><rect x="601.5" y="852.5" width="10" height="3" rx="1.5" fill="#fff" stroke="#2272b4" stroke-width="1"/><path d="M603 868.5 H610 M603 876.5 H610 M603 878.5 H610" stroke="#e03a3a" stroke-width="1"/><path d="M603 870.5 H610" stroke="#2272b4" stroke-width="1"/><rect x="601.5" y="872.5" width="10" height="3" rx="1.5" fill="#fff" stroke="#2272b4" stroke-width="1"/><path d="M603 888.5 H610 M603 896.5 H610 M603 898.5 H610" stroke="#e03a3a" stroke-width="1"/><path d="M603 890.5 H610" stroke="#2272b4" stroke-width="1"/><rect x="601.5" y="892.5" width="10" height="3" rx="1.5" fill="#fff" stroke="#2272b4" stroke-width="1"/><path d="M603 968.5 H610 M603 976.5 H610 M603 978.5 H610" stroke="#e03a3a" stroke-width="1"/><path d="M603 970.5 H610" stroke="#2272b4" stroke-width="1"/><rect x="601.5" y="972.5" width="10" height="3" rx="1.5" fill="#fff" stroke="#2272b4" stroke-width="1"/><rect x="600.5" y="1048.5" width="12" height="11" rx="1.2" fill="#cfe4f5" stroke="#2272b4" stroke-width="1.2"/><rect x="601.2" y="1049.2" width="10.6" height="3" fill="#fff"/><path d="M600.5 1052.2 H612.5" stroke="#2272b4" stroke-width="1"/><path d="M603.5 1047 V1049.5 M609.5 1047 V1049.5" stroke="#2272b4" stroke-width="1.2"/><rect x="600.5" y="1068.5" width="12" height="11" rx="1.2" fill="#cfe4f5" stroke="#2272b4" stroke-width="1.2"/><rect x="601.2" y="1069.2" width="10.6" height="3" fill="#fff"/><path d="M600.5 1072.2 H612.5" stroke="#2272b4" stroke-width="1"/><path d="M603.5 1067 V1069.5 M609.5 1067 V1069.5" stroke="#2272b4" stroke-width="1.2"/><rect x="600.5" y="1088.5" width="12" height="4" rx="1.2" fill="#cfe4f5" stroke="#2272b4" stroke-width="1.2"/><path d="M603.5 1087 V1089.5 M609.5 1087 V1089.5" stroke="#2272b4" stroke-width="1.2"/></svg>
<div style="left:373px;top:1112px;width:148px;height:21px;background:#fbfbfb;border:1px solid #d2d2d2;border-radius:4px;"></div>
<span style="left:297.0px;width:300px;text-align:center;top:1114.5px;line-height:16px;height:16px;font-size:12.5px;transform:scaleX(0.891);transform-origin:50% 50%;">銘柄を表示する</span>
<div style="left:528px;top:1112px;width:148px;height:21px;background:#fbfbfb;border:1px solid #d2d2d2;border-radius:4px;"></div>
<span style="left:452.0px;width:300px;text-align:center;top:1114.5px;line-height:16px;height:16px;font-size:12.5px;transform:scaleX(0.87);transform-origin:50% 50%;">銘柄を非表示にする</span>
<div style="left:683px;top:1112px;width:148px;height:21px;background:#fbfbfb;border:1px solid #d2d2d2;border-radius:4px;"></div>
<span style="left:607.0px;width:300px;text-align:center;top:1114.5px;line-height:16px;height:16px;font-size:12.5px;transform:scaleX(0.829);transform-origin:50% 50%;">カスタム銘柄を作成する</span>
<div style="left:1263px;top:1112px;width:73px;height:21px;background:#fbfbfb;border:1px solid #0a6cc8;border-radius:4px;"></div>
<span style="left:1148.5px;width:300px;text-align:center;top:1115.0px;line-height:16px;height:16px;transform:scaleX(0.865);transform-origin:50% 50%;">OK</span>
<svg style="left:1335px;top:1129px;" width="12" height="12" viewBox="0 0 12 12"><path d="M8 2 h1.5 v1.5 h-1.5z M5 5 h1.5 v1.5 h-1.5z M8 5 h1.5 v1.5 h-1.5z M2 8 h1.5 v1.5 h-1.5z M5 8 h1.5 v1.5 h-1.5z M8 8 h1.5 v1.5 h-1.5z" fill="#c0c0c0"/></svg>
<div style="left:593px;top:315px;width:722px;height:25px;border:5px solid #ff0000;border-radius:3px;"></div>
<div style="left:540px;top:300px;width:50px;height:50px;background:#ff0000;border-radius:25px;"></div>
<span style="left:414.5px;width:300px;text-align:center;top:304.5px;line-height:40px;height:40px;font-size:34px;color:#fff;transform:scaleX(0.872);transform-origin:50% 50%;">12</span>
<svg style="left:701px;top:325px;" width="14" height="22" viewBox="0 0 14 22"><path d="M1 1 V16.2 L4.5 13 L7.1 18.8 L9.2 17.9 L6.7 12.3 H11.3 Z" fill="#fff" stroke="#111" stroke-width="0.9" stroke-linejoin="miter"/></svg>
</body></html>
